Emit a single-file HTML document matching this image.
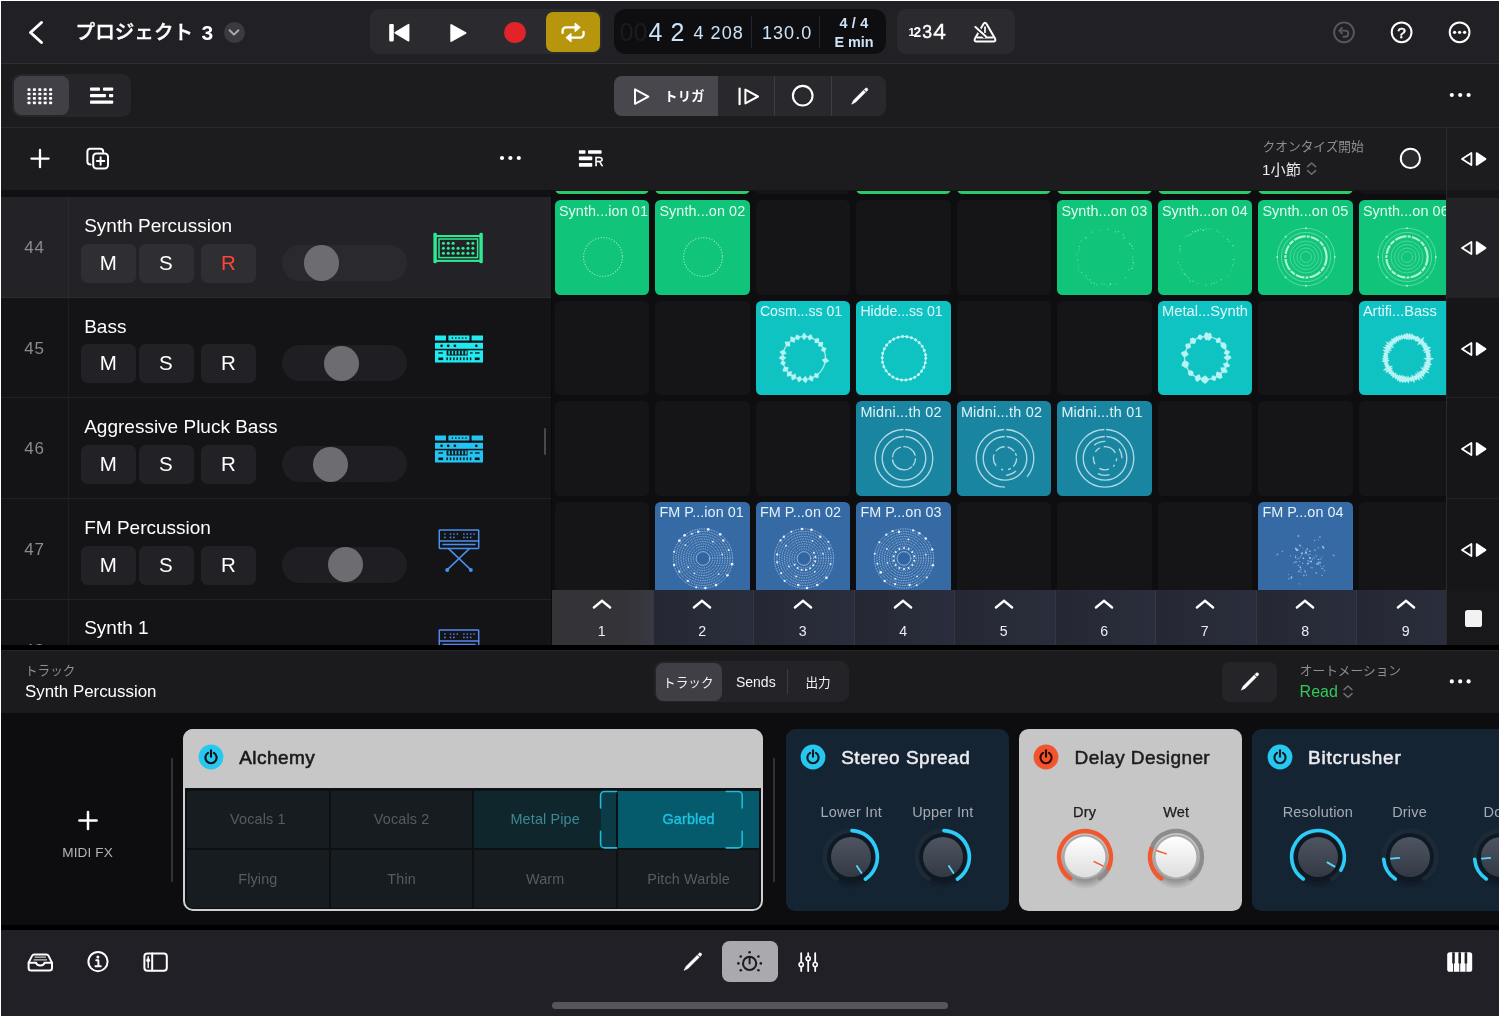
<!DOCTYPE html>
<html lang="ja">
<head>
<meta charset="utf-8">
<title>Logic Pro</title>
<style>
html,body{margin:0;padding:0;background:#fff;}
body{width:1500px;height:1018px;overflow:hidden;}
#app{position:relative;width:1500px;height:1018px;overflow:hidden;background:#0f0f11;
  font-family:"Liberation Sans","Noto Sans CJK JP",sans-serif;color:#fff;}
#app *{box-sizing:border-box;}
.abs{position:absolute;}
.t{position:absolute;white-space:pre;line-height:1;}
#layer{position:absolute;left:0;top:0;width:1500px;height:1018px;will-change:transform;}
svg{position:absolute;overflow:visible;}
/* white frame */
.frame{position:absolute;background:#fff;z-index:100;}
/* bars */
#topbar{left:0;top:0;width:1500px;height:63px;background:#202025;}
#topline{left:0;top:63px;width:1500px;height:1px;background:#2f2f34;}
#bar2{left:0;top:64px;width:1500px;height:63px;background:#1c1c1f;}
#bar2line{left:0;top:127px;width:1500px;height:1px;background:#2a2a2e;}
#hdr{left:0;top:128px;width:1500px;height:62px;background:#1c1c1f;}
.pill{position:absolute;background:#2a2a2f;border-radius:9px;}
</style>
</head>
<body>
<div id="app">
<div id="layer">

<!-- ===== TOP BAR ===== -->
<div class="abs" id="topbar"></div>
<div class="abs" id="topline"></div>
<div class="abs" id="bar2"></div>
<div class="abs" id="bar2line"></div>
<div class="abs" id="hdr"></div>

<svg style="left:24px;top:16px;" width="24" height="32" viewBox="24 16 24 32"><polyline points="41.5,22.5 30.5,32.5 41.5,42.5" fill="none" stroke="#fff" stroke-width="3" stroke-linecap="round" stroke-linejoin="round"/></svg>
<div class="t" style="left:75.6px;top:22.71px;font-size:19.6px;color:#fff;font-weight:500;-webkit-text-stroke:0.4px #fff;">プロジェクト</div>
<div class="t" style="left:201.4px;top:21.72px;font-size:21px;color:#fff;font-weight:700;">3</div>
<div class="abs" style="left:223.5px;top:21.5px;width:21px;height:21px;background:#3a3a40;border-radius:10.5px;"></div>
<svg style="left:223px;top:21px;" width="22" height="22" viewBox="223 21 22 22"><polyline points="229.6,30.2 234,34.6 238.4,30.2" fill="none" stroke="#a9a9b2" stroke-width="2" stroke-linecap="round" stroke-linejoin="round"/></svg>
<div class="abs" style="left:370px;top:9px;width:232px;height:45px;background:#2a2a2f;border-radius:9px;"></div>
<svg style="left:386px;top:20px;" width="28" height="26" viewBox="386 20 28 26"><rect x="389.2" y="24" width="4.6" height="17.4" rx="1.1" fill="#fff"/><path d="M408.6,24.6 L408.6,40.8 L395.2,32.7 Z" fill="#fff" stroke="#fff" stroke-width="1.6" stroke-linejoin="round"/></svg>
<svg style="left:446px;top:20px;" width="26" height="26" viewBox="446 20 26 26"><path d="M451.2,25 L451.2,41 L465.6,33 Z" fill="#fff" stroke="#fff" stroke-width="1.8" stroke-linejoin="round"/></svg>
<div class="abs" style="left:504.3px;top:21.5px;width:21.6px;height:21.6px;background:#e0242a;border-radius:10.8px;"></div>
<div class="abs" style="left:545.6px;top:12px;width:54.8px;height:40px;background:#b7950c;border-radius:7px;"></div>
<svg style="left:556px;top:18px;" width="34" height="28" viewBox="556 18 34 28"><g fill="none" stroke="#fff" stroke-width="2.3" stroke-linecap="round" stroke-linejoin="round"><path d="M562.6,33 v-2.2 a3.4,3.4 0 0 1 3.4,-3.4 h9.6"/><path d="M583.6,31.8 v2.4 a3.4,3.4 0 0 1 -3.4,3.4 h-9.6"/></g><path d="M575.2,23.4 L580,27.4 L575.2,31.4 Z" fill="#fff" stroke="#fff" stroke-width="1.2" stroke-linejoin="round"/><path d="M571,33.6 L566.2,37.6 L571,41.6 Z" fill="#fff" stroke="#fff" stroke-width="1.2" stroke-linejoin="round"/></svg>
<div class="abs" style="left:614px;top:9px;width:272px;height:45px;background:#0e0e10;border-radius:12px;"></div>
<div class="t" style="left:619.5px;top:19.84px;font-size:25px;color:#191c20;">00</div>
<div class="t" style="left:648.5px;top:19.84px;font-size:25px;color:#cde3f7;">4</div>
<div class="t" style="left:670.5px;top:19.84px;font-size:25px;color:#cde3f7;">2</div>
<div class="t" style="left:693.5px;top:23.96px;font-size:18px;color:#cde3f7;letter-spacing:1.05px;">4 208</div>
<div class="abs" style="left:751px;top:16px;width:1px;height:32px;background:#1f2730;"></div>
<div class="t" style="left:762px;top:23.96px;font-size:18px;color:#cde3f7;letter-spacing:1.05px;">130.0</div>
<div class="abs" style="left:819px;top:16px;width:1px;height:32px;background:#1f2730;"></div>
<div class="t" style="left:816px;top:16.11px;width:80px;text-align:center;font-size:14.4px;color:#cde3f7;font-weight:700;letter-spacing:4.4px;">4/4</div>
<div class="t" style="left:814px;top:34.81px;width:80px;text-align:center;font-size:14.4px;color:#cde3f7;font-weight:700;">E min</div>
<div class="abs" style="left:897px;top:9px;width:118px;height:45px;background:#2a2a2f;border-radius:9px;"></div>
<div class="t" style="left:908.4px;top:26.75px;font-size:11.4px;color:#fff;font-weight:700;">1</div>
<div class="t" style="left:913.6px;top:25.82px;font-size:13.8px;color:#fff;font-weight:700;">2</div>
<div class="t" style="left:922.2px;top:23.7px;font-size:17.6px;color:#fff;-webkit-text-stroke:0.45px #fff;">3</div>
<div class="t" style="left:933.2px;top:20.87px;font-size:22.6px;color:#fff;-webkit-text-stroke:0.35px #fff;">4</div>
<svg style="left:970px;top:18px;" width="30" height="30" viewBox="970 18 30 30"><g fill="none" stroke="#fff" stroke-width="2" stroke-linecap="round" stroke-linejoin="round"><path d="M983.4,24 Q985,21.4 986.6,24 L995,38.6 Q996.4,41.6 993.2,41.6 H976.8 Q973.6,41.6 975,38.6 Z"/><path d="M977.4,37.4 h15.2"/></g><path d="M975.4,27 L986,36.6" stroke="#2a2a2f" stroke-width="5" stroke-linecap="butt" fill="none"/><path d="M975.4,27 L986,36.6" stroke="#fff" stroke-width="2" stroke-linecap="round" fill="none"/><path d="M985,27.2 v5" stroke="#fff" stroke-width="1.7" stroke-linecap="round" fill="none"/></svg>
<svg style="left:1332px;top:20px;" width="24" height="24" viewBox="1332 20 24 24"><g fill="none" stroke="#58585e" stroke-width="1.9" stroke-linecap="round" stroke-linejoin="round"><circle cx="1344" cy="32.3" r="9.9"/><path d="M1339.6,30.6 h5.6 a3.1,3.1 0 0 1 0,6.2 h-1.8"/><path d="M1342,27.9 l-2.7,2.7 l2.7,2.7"/></g></svg>
<svg style="left:1389px;top:20px;" width="24" height="24" viewBox="1389 20 24 24"><circle cx="1401.6" cy="32.3" r="9.9" fill="none" stroke="#fff" stroke-width="2"/></svg>
<div class="t" style="left:1386.6px;top:24.68px;width:30px;text-align:center;font-size:15.5px;color:#fff;-webkit-text-stroke:0.5px #fff;">?</div>
<svg style="left:1447px;top:20px;" width="24" height="24" viewBox="1447 20 24 24"><circle cx="1459.6" cy="32.3" r="9.9" fill="none" stroke="#fff" stroke-width="2"/><circle cx="1454.6" cy="32.3" r="1.65" fill="#fff"/><circle cx="1459.6" cy="32.3" r="1.65" fill="#fff"/><circle cx="1464.6" cy="32.3" r="1.65" fill="#fff"/></svg>


<div class="abs" style="left:12px;top:74px;width:119px;height:43px;background:#26262a;border-radius:9px;"></div>
<div class="abs" style="left:13.5px;top:76px;width:55px;height:39px;background:#404046;border-radius:7.5px;"></div>
<svg style="left:26px;top:86px;" width="30" height="20" viewBox="26 86 30 20"><rect x="27.45" y="88.25" width="3.1" height="2.7" rx="0.9" fill="#fff"/><rect x="32.85" y="88.25" width="3.1" height="2.7" rx="0.9" fill="#fff"/><rect x="38.25" y="88.25" width="3.1" height="2.7" rx="0.9" fill="#fff"/><rect x="43.65" y="88.25" width="3.1" height="2.7" rx="0.9" fill="#fff"/><rect x="49.05" y="88.25" width="3.1" height="2.7" rx="0.9" fill="#fff"/><rect x="27.45" y="92.65" width="3.1" height="2.7" rx="0.9" fill="#fff"/><rect x="32.85" y="92.65" width="3.1" height="2.7" rx="0.9" fill="#fff"/><rect x="38.25" y="92.65" width="3.1" height="2.7" rx="0.9" fill="#fff"/><rect x="43.65" y="92.65" width="3.1" height="2.7" rx="0.9" fill="#fff"/><rect x="49.05" y="92.65" width="3.1" height="2.7" rx="0.9" fill="#fff"/><rect x="27.45" y="97.05" width="3.1" height="2.7" rx="0.9" fill="#fff"/><rect x="32.85" y="97.05" width="3.1" height="2.7" rx="0.9" fill="#fff"/><rect x="38.25" y="97.05" width="3.1" height="2.7" rx="0.9" fill="#fff"/><rect x="43.65" y="97.05" width="3.1" height="2.7" rx="0.9" fill="#fff"/><rect x="49.05" y="97.05" width="3.1" height="2.7" rx="0.9" fill="#fff"/><rect x="27.45" y="101.45" width="3.1" height="2.7" rx="0.9" fill="#fff"/><rect x="32.85" y="101.45" width="3.1" height="2.7" rx="0.9" fill="#fff"/><rect x="38.25" y="101.45" width="3.1" height="2.7" rx="0.9" fill="#fff"/><rect x="43.65" y="101.45" width="3.1" height="2.7" rx="0.9" fill="#fff"/><rect x="49.05" y="101.45" width="3.1" height="2.7" rx="0.9" fill="#fff"/></svg>
<svg style="left:88px;top:86px;" width="28" height="20" viewBox="88 86 28 20"><g fill="#fff"><rect x="90" y="87.4" width="10" height="3.3" rx="0.8"/><rect x="103" y="87.4" width="10.2" height="3.3" rx="0.8"/><rect x="90" y="93.9" width="16" height="3.3" rx="0.8"/><rect x="109" y="93.9" width="4.2" height="3.3" rx="0.8"/><rect x="90" y="100.4" width="23.2" height="3.3" rx="0.8"/></g></svg>
<div class="abs" style="left:614px;top:76px;width:272px;height:40px;background:#29292d;border-radius:8px;"></div>
<div class="abs" style="left:614px;top:76px;width:103.5px;height:40px;background:#47474d;border-radius:8px 0 0 8px;"></div>
<div class="abs" style="left:774px;top:76px;width:1px;height:40px;background:#3d3d42;"></div>
<div class="abs" style="left:831.4px;top:76px;width:1px;height:40px;background:#3d3d42;"></div>
<svg style="left:630px;top:86px;" width="22" height="22" viewBox="630 86 22 22"><path d="M635,89.4 L635,103.8 L648.4,96.6 Z" fill="none" stroke="#fff" stroke-width="2" stroke-linejoin="round"/></svg>
<div class="t" style="left:664.2px;top:90.13px;font-size:13.2px;color:#fff;font-weight:700;letter-spacing:0.3px;">トリガ</div>
<svg style="left:736px;top:86px;" width="26" height="22" viewBox="736 86 26 22"><path d="M739.6,88.6 V104.2" stroke="#fff" stroke-width="2.2" stroke-linecap="round" fill="none"/><path d="M745.4,89.6 L745.4,103.4 L758,96.5 Z" fill="none" stroke="#fff" stroke-width="2" stroke-linejoin="round"/></svg>
<svg style="left:790px;top:84px;" width="26" height="24" viewBox="790 84 26 24"><circle cx="802.7" cy="95.7" r="9.8" fill="none" stroke="#fff" stroke-width="2.1"/></svg>
<svg style="left:848px;top:84px;" width="24" height="24" viewBox="848 84 24 24"><path d="M851.6,104.2 L855.6,102.26 L865.51,92.34 L863.46,90.29 L853.54,100.2 Z" fill="#fff" stroke="#fff" stroke-width="0.5" stroke-linejoin="round"/><path d="M866.22,91.63 L867.92,89.93 Q868.02,87.78 865.87,87.88 L864.17,89.58 Z" fill="#fff" stroke="#fff" stroke-width="0.5" stroke-linejoin="round"/></svg>
<svg style="left:1446px;top:90px;" width="28" height="10" viewBox="1446 90 28 10"><circle cx="1451.8" cy="95" r="2.1" fill="#fff"/><circle cx="1460.2" cy="95" r="2.1" fill="#fff"/><circle cx="1468.6" cy="95" r="2.1" fill="#fff"/></svg>


<svg style="left:30px;top:148px;" width="20" height="20" viewBox="30 148 20 20"><path d="M40,150 V167.2 M31.4,158.6 H48.6" stroke="#fff" stroke-width="2.3" stroke-linecap="round" fill="none"/></svg>
<svg style="left:85px;top:146px;" width="26" height="26" viewBox="85 146 26 26"><g fill="none" stroke="#fff" stroke-width="2" stroke-linecap="round" stroke-linejoin="round"><path d="M90.6,164.4 h-0.2 a3,3 0 0 1 -3,-3 v-9.6 a3,3 0 0 1 3,-3 h9.8 a3,3 0 0 1 3,3 v0.2"/><rect x="93.2" y="153.6" width="14.8" height="14.8" rx="3.2"/><path d="M100.6,157.3 v7.4 M96.9,161 h7.4"/></g></svg>
<svg style="left:498px;top:153px;" width="26" height="10" viewBox="498 153 26 10"><circle cx="502" cy="158" r="2.1" fill="#fff"/><circle cx="510.4" cy="158" r="2.1" fill="#fff"/><circle cx="518.8" cy="158" r="2.1" fill="#fff"/></svg>
<svg style="left:576px;top:148px;" width="30" height="22" viewBox="576 148 30 22"><g fill="#fff"><rect x="578.9" y="150.2" width="6.6" height="3.6" rx="0.7"/><rect x="588" y="150.2" width="13.6" height="3.6" rx="0.7"/><rect x="578.9" y="156.6" width="13.4" height="3.6" rx="0.7"/><rect x="578.9" y="163.1" width="13.4" height="3.6" rx="0.7"/></g></svg>
<div class="t" style="left:594.4px;top:156.4px;font-size:12.4px;color:#fff;-webkit-text-stroke:0.4px #fff;">R</div>
<div class="t" style="left:1262.6px;top:141.45px;font-size:12.7px;color:#8e8e93;">クオンタイズ開始</div>
<div class="t" style="left:1262px;top:161.53px;font-size:15.2px;color:#e8e8ed;">1小節</div>
<svg style="left:1304px;top:160px;" width="16" height="18" viewBox="1304 160 16 18"><g fill="none" stroke="#6e6e73" stroke-width="1.5" stroke-linecap="round" stroke-linejoin="round"><polyline points="1307.6,166.6 1311.6,163 1315.6,166.6"/><polyline points="1307.6,170.6 1311.6,174.2 1315.6,170.6"/></g></svg>
<svg style="left:1398px;top:146px;" width="26" height="26" viewBox="1398 146 26 26"><circle cx="1410.4" cy="158.4" r="9.6" fill="#2b2b2e" stroke="#fff" stroke-width="2"/></svg>


<div class="abs" style="left:0;top:190px;width:552px;height:455px;overflow:hidden;background:#141416;">
<div class="abs" style="left:0;top:-190px;width:552px;height:700px;">
<div class="abs" style="left:0px;top:190px;width:552px;height:7.5px;background:#111113;"></div>
<div class="abs" style="left:0px;top:197.2px;width:551px;height:100.6px;background:#232327;"></div>
<div class="abs" style="left:0px;top:296.8px;width:551px;height:1px;background:#2b2b2f;"></div>
<div class="abs" style="left:68px;top:197.2px;width:1px;height:100.6px;background:#2a2a2e;"></div>
<div class="t" style="left:4.6px;top:239.21px;width:60px;text-align:center;font-size:17px;color:#8a8a8f;letter-spacing:0.9px;">44</div>
<div class="t" style="left:84.2px;top:215.92px;font-size:19px;color:#fff;">Synth Percussion</div>
<div class="abs" style="left:81px;top:243.7px;width:55px;height:39px;background:#2e2e33;border-radius:6.5px;"></div>
<div class="t" style="left:80.9px;top:252.85px;width:55px;text-align:center;font-size:20.5px;color:#fff;">M</div>
<div class="abs" style="left:138.5px;top:243.7px;width:55px;height:39px;background:#2e2e33;border-radius:6.5px;"></div>
<div class="t" style="left:138.4px;top:252.85px;width:55px;text-align:center;font-size:20.5px;color:#fff;">S</div>
<div class="abs" style="left:201px;top:243.7px;width:55px;height:39px;background:#2e2e33;border-radius:6.5px;"></div>
<div class="t" style="left:200.9px;top:252.85px;width:55px;text-align:center;font-size:20.5px;color:#ff453a;">R</div>
<div class="abs" style="left:282px;top:244.7px;width:125px;height:36px;background:#2a2a2e;border-radius:18px;"></div>
<div class="abs" style="left:303.9px;top:245.3px;width:35.4px;height:35.4px;background:#6c6c71;border-radius:17.7px;"></div>
<div class="abs" style="left:0px;top:297.8px;width:551px;height:100.6px;background:#141416;"></div>
<div class="abs" style="left:0px;top:397.4px;width:551px;height:1px;background:#222225;"></div>
<div class="abs" style="left:68px;top:297.8px;width:1px;height:100.6px;background:#1f1f22;"></div>
<div class="t" style="left:4.6px;top:339.81px;width:60px;text-align:center;font-size:17px;color:#8a8a8f;letter-spacing:0.9px;">45</div>
<div class="t" style="left:84.2px;top:316.52px;font-size:19px;color:#fff;">Bass</div>
<div class="abs" style="left:81px;top:344.3px;width:55px;height:39px;background:#222226;border-radius:6.5px;"></div>
<div class="t" style="left:80.9px;top:353.45px;width:55px;text-align:center;font-size:20.5px;color:#fff;">M</div>
<div class="abs" style="left:138.5px;top:344.3px;width:55px;height:39px;background:#222226;border-radius:6.5px;"></div>
<div class="t" style="left:138.4px;top:353.45px;width:55px;text-align:center;font-size:20.5px;color:#fff;">S</div>
<div class="abs" style="left:201px;top:344.3px;width:55px;height:39px;background:#222226;border-radius:6.5px;"></div>
<div class="t" style="left:200.9px;top:353.45px;width:55px;text-align:center;font-size:20.5px;color:#fff;">R</div>
<div class="abs" style="left:282px;top:345.3px;width:125px;height:36px;background:#1f1f23;border-radius:18px;"></div>
<div class="abs" style="left:323.9px;top:345.9px;width:35.4px;height:35.4px;background:#6c6c71;border-radius:17.7px;"></div>
<div class="abs" style="left:0px;top:398.4px;width:551px;height:100.6px;background:#141416;"></div>
<div class="abs" style="left:0px;top:498px;width:551px;height:1px;background:#222225;"></div>
<div class="abs" style="left:68px;top:398.4px;width:1px;height:100.6px;background:#1f1f22;"></div>
<div class="t" style="left:4.6px;top:440.41px;width:60px;text-align:center;font-size:17px;color:#8a8a8f;letter-spacing:0.9px;">46</div>
<div class="t" style="left:84.2px;top:417.12px;font-size:19px;color:#fff;">Aggressive Pluck Bass</div>
<div class="abs" style="left:81px;top:444.9px;width:55px;height:39px;background:#222226;border-radius:6.5px;"></div>
<div class="t" style="left:80.9px;top:454.05px;width:55px;text-align:center;font-size:20.5px;color:#fff;">M</div>
<div class="abs" style="left:138.5px;top:444.9px;width:55px;height:39px;background:#222226;border-radius:6.5px;"></div>
<div class="t" style="left:138.4px;top:454.05px;width:55px;text-align:center;font-size:20.5px;color:#fff;">S</div>
<div class="abs" style="left:201px;top:444.9px;width:55px;height:39px;background:#222226;border-radius:6.5px;"></div>
<div class="t" style="left:200.9px;top:454.05px;width:55px;text-align:center;font-size:20.5px;color:#fff;">R</div>
<div class="abs" style="left:282px;top:445.9px;width:125px;height:36px;background:#1f1f23;border-radius:18px;"></div>
<div class="abs" style="left:312.5px;top:446.5px;width:35.4px;height:35.4px;background:#6c6c71;border-radius:17.7px;"></div>
<div class="abs" style="left:0px;top:499px;width:551px;height:100.6px;background:#141416;"></div>
<div class="abs" style="left:0px;top:598.6px;width:551px;height:1px;background:#222225;"></div>
<div class="abs" style="left:68px;top:499px;width:1px;height:100.6px;background:#1f1f22;"></div>
<div class="t" style="left:4.6px;top:541.01px;width:60px;text-align:center;font-size:17px;color:#8a8a8f;letter-spacing:0.9px;">47</div>
<div class="t" style="left:84.2px;top:517.72px;font-size:19px;color:#fff;">FM Percussion</div>
<div class="abs" style="left:81px;top:545.5px;width:55px;height:39px;background:#222226;border-radius:6.5px;"></div>
<div class="t" style="left:80.9px;top:554.65px;width:55px;text-align:center;font-size:20.5px;color:#fff;">M</div>
<div class="abs" style="left:138.5px;top:545.5px;width:55px;height:39px;background:#222226;border-radius:6.5px;"></div>
<div class="t" style="left:138.4px;top:554.65px;width:55px;text-align:center;font-size:20.5px;color:#fff;">S</div>
<div class="abs" style="left:201px;top:545.5px;width:55px;height:39px;background:#222226;border-radius:6.5px;"></div>
<div class="t" style="left:200.9px;top:554.65px;width:55px;text-align:center;font-size:20.5px;color:#fff;">R</div>
<div class="abs" style="left:282px;top:546.5px;width:125px;height:36px;background:#1f1f23;border-radius:18px;"></div>
<div class="abs" style="left:327.6px;top:547.1px;width:35.4px;height:35.4px;background:#6c6c71;border-radius:17.7px;"></div>
<div class="abs" style="left:0px;top:599.6px;width:551px;height:100.6px;background:#141416;"></div>
<div class="abs" style="left:0px;top:699.2px;width:551px;height:1px;background:#222225;"></div>
<div class="abs" style="left:68px;top:599.6px;width:1px;height:100.6px;background:#1f1f22;"></div>
<div class="t" style="left:4.6px;top:641.61px;width:60px;text-align:center;font-size:17px;color:#8a8a8f;letter-spacing:0.9px;">48</div>
<div class="t" style="left:84.2px;top:618.32px;font-size:19px;color:#fff;">Synth 1</div>
<div class="abs" style="left:81px;top:646.1px;width:55px;height:39px;background:#222226;border-radius:6.5px;"></div>
<div class="t" style="left:80.9px;top:655.25px;width:55px;text-align:center;font-size:20.5px;color:#fff;">M</div>
<div class="abs" style="left:138.5px;top:646.1px;width:55px;height:39px;background:#222226;border-radius:6.5px;"></div>
<div class="t" style="left:138.4px;top:655.25px;width:55px;text-align:center;font-size:20.5px;color:#fff;">S</div>
<div class="abs" style="left:201px;top:646.1px;width:55px;height:39px;background:#222226;border-radius:6.5px;"></div>
<div class="t" style="left:200.9px;top:655.25px;width:55px;text-align:center;font-size:20.5px;color:#fff;">R</div>
<div class="abs" style="left:282px;top:647.1px;width:125px;height:36px;background:#1f1f23;border-radius:18px;"></div>
<div class="abs" style="left:320.3px;top:647.7px;width:35.4px;height:35.4px;background:#6c6c71;border-radius:17.7px;"></div>
<svg style="left:430.4px;top:230px;" width="56" height="36" viewBox="430.4 230 56 36"><g fill="#2eea94"><rect x="433.8" y="232.7" width="3.4" height="30.6" rx="1.4"/><rect x="479.8" y="232.7" width="3.4" height="30.6" rx="1.4"/><rect x="435.5" y="235" width="46" height="2.1"/><rect x="435.5" y="259.8" width="46" height="2.1"/></g><rect x="439.4" y="239" width="38.6" height="18.6" fill="none" stroke="#2eea94" stroke-width="1.5"/><circle cx="443.8" cy="243.3" r="1.55" fill="#2eea94"/><circle cx="448.7" cy="243.3" r="1.55" fill="#2eea94"/><circle cx="453.5" cy="243.3" r="1.55" fill="#2eea94"/><circle cx="468.4" cy="243.3" r="1.55" fill="#2eea94"/><circle cx="473.3" cy="243.3" r="1.55" fill="#2eea94"/><circle cx="443.8" cy="248.3" r="1.55" fill="#2eea94"/><circle cx="448.7" cy="248.3" r="1.55" fill="#2eea94"/><circle cx="453.5" cy="248.3" r="1.55" fill="#2eea94"/><circle cx="458.5" cy="248.3" r="1.55" fill="#2eea94"/><circle cx="463.4" cy="248.3" r="1.55" fill="#2eea94"/><circle cx="468.4" cy="248.3" r="1.55" fill="#2eea94"/><circle cx="473.3" cy="248.3" r="1.55" fill="#2eea94"/><circle cx="443.8" cy="253.3" r="1.55" fill="#2eea94"/><circle cx="448.7" cy="253.3" r="1.55" fill="#2eea94"/><circle cx="453.5" cy="253.3" r="1.55" fill="#2eea94"/><circle cx="458.5" cy="253.3" r="1.55" fill="#2eea94"/><circle cx="463.4" cy="253.3" r="1.55" fill="#2eea94"/><circle cx="468.4" cy="253.3" r="1.55" fill="#2eea94"/><circle cx="473.3" cy="253.3" r="1.55" fill="#2eea94"/></svg>
<svg style="left:432.6px;top:332.6px;" width="52" height="32" viewBox="432.6 332.6 52 32"><g fill="#1feaf2"><rect x="434.6" y="335.1" width="11" height="5"/><rect x="448" y="335.1" width="21" height="5"/><rect x="471.2" y="335.1" width="11.4" height="5"/><rect x="434.6" y="342.4" width="48" height="6"/><rect x="434.6" y="349.9" width="48" height="12.2"/></g><g fill="#141416"><rect x="451.2" y="336.9" width="1.5" height="1.4"/><rect x="454.6" y="336.9" width="1.5" height="1.4"/><rect x="458" y="336.9" width="1.5" height="1.4"/><rect x="461.4" y="336.9" width="1.5" height="1.4"/><rect x="464.8" y="336.9" width="1.5" height="1.4"/><circle cx="441.2" cy="345.4" r="1.35"/><circle cx="447.8" cy="345.4" r="1.35"/><circle cx="454.5" cy="345.4" r="1.35"/><circle cx="475.9" cy="345.4" r="1.35"/><rect x="446.2" y="349.9" width="21" height="5.2"/><rect x="438" y="351.9" width="4.6" height="1.3"/><rect x="469.6" y="351.9" width="2.6" height="1.3"/><rect x="474.6" y="351.9" width="4.6" height="1.3"/><rect x="438" y="357.1" width="4.8" height="2.6"/><rect x="474.4" y="357.1" width="4.8" height="2.6"/><rect x="446" y="357" width="1.5" height="2.8"/><rect x="449.35" y="357" width="1.5" height="2.8"/><rect x="452.7" y="357" width="1.5" height="2.8"/><rect x="456.05" y="357" width="1.5" height="2.8"/><rect x="459.4" y="357" width="1.5" height="2.8"/><rect x="462.75" y="357" width="1.5" height="2.8"/><rect x="466.1" y="357" width="1.5" height="2.8"/><rect x="469.45" y="357" width="1.5" height="2.8"/></g><g fill="#1feaf2"><rect x="448" y="350.5" width="1.5" height="3.6"/><rect x="451.35" y="350.5" width="1.5" height="3.6"/><rect x="454.7" y="350.5" width="1.5" height="3.6"/><rect x="458.05" y="350.5" width="1.5" height="3.6"/><rect x="461.4" y="350.5" width="1.5" height="3.6"/><rect x="464.75" y="350.5" width="1.5" height="3.6"/></g></svg>
<svg style="left:432.6px;top:433.1px;" width="52" height="32" viewBox="432.6 433.1 52 32"><g fill="#22c4f4"><rect x="434.6" y="435.6" width="11" height="5"/><rect x="448" y="435.6" width="21" height="5"/><rect x="471.2" y="435.6" width="11.4" height="5"/><rect x="434.6" y="442.9" width="48" height="6"/><rect x="434.6" y="450.4" width="48" height="12.2"/></g><g fill="#141416"><rect x="451.2" y="437.4" width="1.5" height="1.4"/><rect x="454.6" y="437.4" width="1.5" height="1.4"/><rect x="458" y="437.4" width="1.5" height="1.4"/><rect x="461.4" y="437.4" width="1.5" height="1.4"/><rect x="464.8" y="437.4" width="1.5" height="1.4"/><circle cx="441.2" cy="445.9" r="1.35"/><circle cx="447.8" cy="445.9" r="1.35"/><circle cx="454.5" cy="445.9" r="1.35"/><circle cx="475.9" cy="445.9" r="1.35"/><rect x="446.2" y="450.4" width="21" height="5.2"/><rect x="438" y="452.4" width="4.6" height="1.3"/><rect x="469.6" y="452.4" width="2.6" height="1.3"/><rect x="474.6" y="452.4" width="4.6" height="1.3"/><rect x="438" y="457.6" width="4.8" height="2.6"/><rect x="474.4" y="457.6" width="4.8" height="2.6"/><rect x="446" y="457.5" width="1.5" height="2.8"/><rect x="449.35" y="457.5" width="1.5" height="2.8"/><rect x="452.7" y="457.5" width="1.5" height="2.8"/><rect x="456.05" y="457.5" width="1.5" height="2.8"/><rect x="459.4" y="457.5" width="1.5" height="2.8"/><rect x="462.75" y="457.5" width="1.5" height="2.8"/><rect x="466.1" y="457.5" width="1.5" height="2.8"/><rect x="469.45" y="457.5" width="1.5" height="2.8"/></g><g fill="#22c4f4"><rect x="448" y="451" width="1.5" height="3.6"/><rect x="451.35" y="451" width="1.5" height="3.6"/><rect x="454.7" y="451" width="1.5" height="3.6"/><rect x="458.05" y="451" width="1.5" height="3.6"/><rect x="461.4" y="451" width="1.5" height="3.6"/><rect x="464.75" y="451" width="1.5" height="3.6"/></g></svg>
<svg style="left:434.7px;top:527.6px;" width="48" height="46" viewBox="434.7 527.6 48 46"><g fill="none" stroke="#4a90ee" stroke-width="1.5" stroke-linejoin="round" stroke-linecap="round"><rect x="439" y="529.6" width="39.4" height="18.4" rx="0.6"/><path d="M439,540.6 h39.4"/><path d="M442.7,544.2 h32"/><path d="M448.3,548.2 L470.3,569.2 M469.1,548.2 L447.1,569.2"/></g><g fill="#4a90ee"><circle cx="444.6" cy="533.6" r="0.85"/><circle cx="450.2" cy="533.6" r="0.85"/><circle cx="453.6" cy="533.6" r="0.85"/><circle cx="457" cy="533.6" r="0.85"/><circle cx="463.6" cy="533.6" r="0.85"/><circle cx="467" cy="533.6" r="0.85"/><circle cx="470.4" cy="533.6" r="0.85"/><circle cx="473.8" cy="533.6" r="0.85"/><circle cx="444.6" cy="537" r="0.85"/><circle cx="450.2" cy="537" r="0.85"/><circle cx="453.6" cy="537" r="0.85"/><circle cx="463.6" cy="537" r="0.85"/><circle cx="467" cy="537" r="0.85"/><circle cx="470.4" cy="537" r="0.85"/><circle cx="446.9" cy="569.6" r="2"/><circle cx="470.5" cy="569.6" r="2"/></g></svg>
<svg style="left:434.7px;top:628.2px;" width="48" height="46" viewBox="434.7 628.2 48 46"><g fill="none" stroke="#5486f0" stroke-width="1.5" stroke-linejoin="round" stroke-linecap="round"><rect x="439" y="630.2" width="39.4" height="18.4" rx="0.6"/><path d="M439,641.2 h39.4"/><path d="M442.7,644.8 h32"/></g><g fill="#5486f0"><circle cx="444.6" cy="634.2" r="0.85"/><circle cx="450.2" cy="634.2" r="0.85"/><circle cx="453.6" cy="634.2" r="0.85"/><circle cx="457" cy="634.2" r="0.85"/><circle cx="463.6" cy="634.2" r="0.85"/><circle cx="467" cy="634.2" r="0.85"/><circle cx="470.4" cy="634.2" r="0.85"/><circle cx="473.8" cy="634.2" r="0.85"/><circle cx="444.6" cy="637.6" r="0.85"/><circle cx="450.2" cy="637.6" r="0.85"/><circle cx="453.6" cy="637.6" r="0.85"/><circle cx="463.6" cy="637.6" r="0.85"/><circle cx="467" cy="637.6" r="0.85"/><circle cx="470.4" cy="637.6" r="0.85"/></g></svg>
<div class="abs" style="left:543.6px;top:428px;width:2.6px;height:27px;background:#47474c;border-radius:1.3px;"></div>
</div></div>
<div class="abs" style="left:551px;top:190px;width:1px;height:455px;background:#0a0a0b;"></div>
<div class="abs" style="left:1446px;top:128px;width:54px;height:62px;background:#1c1c1f;"></div>
<div class="abs" style="left:1446px;top:190px;width:54px;height:455px;background:#161618;"></div>
<div class="abs" style="left:1446px;top:197.5px;width:54px;height:100.6px;background:#232327;"></div>
<div class="abs" style="left:1446px;top:296.8px;width:54px;height:1px;background:#222225;"></div>
<div class="abs" style="left:1446px;top:397.4px;width:54px;height:1px;background:#222225;"></div>
<div class="abs" style="left:1446px;top:498px;width:54px;height:1px;background:#222225;"></div>
<div class="abs" style="left:1446px;top:598.6px;width:54px;height:1px;background:#222225;"></div>
<div class="abs" style="left:1446px;top:128px;width:1px;height:517px;background:#2a2a2d;"></div>
<div class="abs" style="left:1446px;top:590px;width:54px;height:55px;background:#18181b;"></div>
<div class="abs" style="left:1446px;top:590px;width:1px;height:55px;background:#2a2a2d;"></div>
<svg style="left:1456px;top:148.8px;" width="36" height="20" viewBox="1456 148.8 36 20"><path d="M1471.4,152.8 L1471.4,164.8 L1462,158.8 Z" fill="none" stroke="#fff" stroke-width="1.8" stroke-linejoin="round"/><path d="M1476.6,152.8 L1476.6,164.8 L1485.6,158.8 Z" fill="#fff" stroke="#fff" stroke-width="1.6" stroke-linejoin="round"/></svg>
<svg style="left:1456px;top:238.2px;" width="36" height="20" viewBox="1456 238.2 36 20"><path d="M1471.4,242.2 L1471.4,254.2 L1462,248.2 Z" fill="none" stroke="#fff" stroke-width="1.8" stroke-linejoin="round"/><path d="M1476.6,242.2 L1476.6,254.2 L1485.6,248.2 Z" fill="#fff" stroke="#fff" stroke-width="1.6" stroke-linejoin="round"/></svg>
<svg style="left:1456px;top:338.8px;" width="36" height="20" viewBox="1456 338.8 36 20"><path d="M1471.4,342.8 L1471.4,354.8 L1462,348.8 Z" fill="none" stroke="#fff" stroke-width="1.8" stroke-linejoin="round"/><path d="M1476.6,342.8 L1476.6,354.8 L1485.6,348.8 Z" fill="#fff" stroke="#fff" stroke-width="1.6" stroke-linejoin="round"/></svg>
<svg style="left:1456px;top:439.4px;" width="36" height="20" viewBox="1456 439.4 36 20"><path d="M1471.4,443.4 L1471.4,455.4 L1462,449.4 Z" fill="none" stroke="#fff" stroke-width="1.8" stroke-linejoin="round"/><path d="M1476.6,443.4 L1476.6,455.4 L1485.6,449.4 Z" fill="#fff" stroke="#fff" stroke-width="1.6" stroke-linejoin="round"/></svg>
<svg style="left:1456px;top:540px;" width="36" height="20" viewBox="1456 540 36 20"><path d="M1471.4,544 L1471.4,556 L1462,550 Z" fill="none" stroke="#fff" stroke-width="1.8" stroke-linejoin="round"/><path d="M1476.6,544 L1476.6,556 L1485.6,550 Z" fill="#fff" stroke="#fff" stroke-width="1.6" stroke-linejoin="round"/></svg>
<div class="abs" style="left:1465px;top:610px;width:17.2px;height:17.2px;background:#f2f2f2;border-radius:2.6px;"></div>


<div class="abs" style="left:552px;top:190px;width:894px;height:400px;overflow:hidden;background:#0e0e10;">
<div class="abs" style="left:-552px;top:-190px;width:1500px;height:700px;">
<div class="abs" style="left:554.5px;top:99.5px;width:94.5px;height:94.5px;background:#2cc968;border-radius:5.5px;"></div>
<div class="abs" style="left:655px;top:99.5px;width:94.5px;height:94.5px;background:#2cc968;border-radius:5.5px;"></div>
<div class="abs" style="left:755.5px;top:99.5px;width:94.5px;height:94.5px;background:#151518;border-radius:5.5px;"></div>
<div class="abs" style="left:856px;top:99.5px;width:94.5px;height:94.5px;background:#2cc968;border-radius:5.5px;"></div>
<div class="abs" style="left:956.5px;top:99.5px;width:94.5px;height:94.5px;background:#2cc968;border-radius:5.5px;"></div>
<div class="abs" style="left:1057px;top:99.5px;width:94.5px;height:94.5px;background:#2cc968;border-radius:5.5px;"></div>
<div class="abs" style="left:1157.5px;top:99.5px;width:94.5px;height:94.5px;background:#2cc968;border-radius:5.5px;"></div>
<div class="abs" style="left:1258px;top:99.5px;width:94.5px;height:94.5px;background:#2cc968;border-radius:5.5px;"></div>
<div class="abs" style="left:1358.5px;top:99.5px;width:94.5px;height:94.5px;background:#151518;border-radius:5.5px;"></div>
<div class="abs" style="left:554.5px;top:200px;width:94.5px;height:94.5px;background:#10c47a;border-radius:5.5px;"></div>
<div class="t" style="left:558.9px;top:203.51px;font-size:14.4px;color:#f1fff8;letter-spacing:0.08px;opacity:0.93;">Synth...ion 01</div>
<svg style="left:554.5px;top:220px;" width="94.5" height="74" viewBox="554.5 220 94.5 74"><circle cx="602.5" cy="257" r="19.4" fill="none" stroke="#d8ffe9" stroke-opacity="0.62" stroke-width="1.35" stroke-linecap="round" stroke-dasharray="0.01 2.77"/></svg>
<div class="abs" style="left:655px;top:200px;width:94.5px;height:94.5px;background:#10c47a;border-radius:5.5px;"></div>
<div class="t" style="left:659.4px;top:203.51px;font-size:14.4px;color:#f1fff8;letter-spacing:0.08px;opacity:0.93;">Synth...on 02</div>
<svg style="left:655px;top:220px;" width="94.5" height="74" viewBox="655 220 94.5 74"><circle cx="703" cy="257" r="19.4" fill="none" stroke="#d8ffe9" stroke-opacity="0.62" stroke-width="1.35" stroke-linecap="round" stroke-dasharray="0.01 2.77"/></svg>
<div class="abs" style="left:755.5px;top:200px;width:94.5px;height:94.5px;background:#151518;border-radius:5.5px;"></div>
<div class="abs" style="left:856px;top:200px;width:94.5px;height:94.5px;background:#151518;border-radius:5.5px;"></div>
<div class="abs" style="left:956.5px;top:200px;width:94.5px;height:94.5px;background:#151518;border-radius:5.5px;"></div>
<div class="abs" style="left:1057px;top:200px;width:94.5px;height:94.5px;background:#10c47a;border-radius:5.5px;"></div>
<div class="t" style="left:1061.4px;top:203.51px;font-size:14.4px;color:#f1fff8;letter-spacing:0.08px;opacity:0.93;">Synth...on 03</div>
<svg style="left:1057px;top:220px;" width="94.5" height="74" viewBox="1057 220 94.5 74"><g fill="#d8ffe9"><circle cx="1107.71" cy="229.45" r="0.72" fill-opacity="0.46"/><circle cx="1115.49" cy="231.66" r="0.85" fill-opacity="0.33"/><circle cx="1118.58" cy="231.59" r="0.72" fill-opacity="0.42"/><circle cx="1123.32" cy="234.67" r="0.76" fill-opacity="0.43"/><circle cx="1124.06" cy="237.94" r="0.71" fill-opacity="0.52"/><circle cx="1129.64" cy="243.83" r="0.81" fill-opacity="0.5"/><circle cx="1131.8" cy="245.9" r="0.78" fill-opacity="0.39"/><circle cx="1132.79" cy="248.57" r="0.53" fill-opacity="0.56"/><circle cx="1132.85" cy="257" r="0.61" fill-opacity="0.47"/><circle cx="1132.59" cy="259.72" r="0.7" fill-opacity="0.37"/><circle cx="1133.41" cy="262.65" r="0.83" fill-opacity="0.49"/><circle cx="1132.92" cy="265.47" r="0.56" fill-opacity="0.48"/><circle cx="1131.9" cy="268.14" r="0.7" fill-opacity="0.57"/><circle cx="1129.08" cy="269.87" r="0.7" fill-opacity="0.54"/><circle cx="1125.63" cy="277.63" r="0.78" fill-opacity="0.28"/><circle cx="1116.06" cy="283.7" r="0.72" fill-opacity="0.27"/><circle cx="1110.38" cy="284.06" r="0.84" fill-opacity="0.56"/><circle cx="1107.86" cy="286.06" r="0.53" fill-opacity="0.36"/><circle cx="1105" cy="283.88" r="0.64" fill-opacity="0.32"/><circle cx="1102.34" cy="284.04" r="0.8" fill-opacity="0.26"/><circle cx="1096.6" cy="284.71" r="0.66" fill-opacity="0.38"/><circle cx="1094.15" cy="283.19" r="0.7" fill-opacity="0.46"/><circle cx="1091.3" cy="282.63" r="0.65" fill-opacity="0.43"/><circle cx="1089.79" cy="279.76" r="0.84" fill-opacity="0.36"/><circle cx="1087.16" cy="278.73" r="0.65" fill-opacity="0.25"/><circle cx="1086.02" cy="275.98" r="0.72" fill-opacity="0.47"/><circle cx="1081.79" cy="272.51" r="0.62" fill-opacity="0.49"/><circle cx="1079.8" cy="270.47" r="0.52" fill-opacity="0.26"/><circle cx="1078.1" cy="268.14" r="0.66" fill-opacity="0.34"/><circle cx="1078.62" cy="265" r="0.61" fill-opacity="0.38"/><circle cx="1077.61" cy="259.7" r="0.77" fill-opacity="0.38"/><circle cx="1076.57" cy="254.2" r="0.58" fill-opacity="0.36"/><circle cx="1078.15" cy="251.66" r="0.65" fill-opacity="0.32"/><circle cx="1079.12" cy="249.15" r="0.62" fill-opacity="0.36"/><circle cx="1079.27" cy="246.34" r="0.56" fill-opacity="0.55"/><circle cx="1080.95" cy="240.93" r="0.58" fill-opacity="0.41"/><circle cx="1085.73" cy="237.73" r="0.79" fill-opacity="0.53"/><circle cx="1091.64" cy="232.01" r="0.62" fill-opacity="0.53"/><circle cx="1099.64" cy="230.08" r="0.65" fill-opacity="0.37"/></g></svg>
<div class="abs" style="left:1157.5px;top:200px;width:94.5px;height:94.5px;background:#10c47a;border-radius:5.5px;"></div>
<div class="t" style="left:1161.9px;top:203.51px;font-size:14.4px;color:#f1fff8;letter-spacing:0.08px;opacity:0.93;">Synth...on 04</div>
<svg style="left:1157.5px;top:220px;" width="94.5" height="74" viewBox="1157.5 220 94.5 74"><g fill="#d8ffe9"><circle cx="1205.5" cy="228.86" r="0.66" fill-opacity="0.57"/><circle cx="1208.27" cy="228.93" r="0.68" fill-opacity="0.31"/><circle cx="1211.1" cy="228.85" r="0.61" fill-opacity="0.28"/><circle cx="1216.39" cy="230.7" r="0.84" fill-opacity="0.26"/><circle cx="1218.87" cy="231.98" r="0.56" fill-opacity="0.47"/><circle cx="1222.59" cy="236.17" r="0.58" fill-opacity="0.32"/><circle cx="1227.03" cy="239.33" r="0.68" fill-opacity="0.54"/><circle cx="1228.78" cy="241.44" r="0.66" fill-opacity="0.48"/><circle cx="1232.47" cy="245.83" r="0.75" fill-opacity="0.54"/><circle cx="1233.13" cy="259.72" r="0.64" fill-opacity="0.55"/><circle cx="1233.78" cy="262.63" r="0.57" fill-opacity="0.25"/><circle cx="1232.23" cy="265.11" r="0.64" fill-opacity="0.59"/><circle cx="1230.78" cy="270.51" r="0.53" fill-opacity="0.34"/><circle cx="1227.62" cy="275.16" r="0.59" fill-opacity="0.29"/><circle cx="1220.63" cy="279.64" r="0.66" fill-opacity="0.45"/><circle cx="1215.88" cy="282.05" r="0.54" fill-opacity="0.48"/><circle cx="1213.43" cy="283.13" r="0.84" fill-opacity="0.34"/><circle cx="1210.87" cy="284" r="0.57" fill-opacity="0.56"/><circle cx="1205.5" cy="285.34" r="0.85" fill-opacity="0.29"/><circle cx="1197.49" cy="283.4" r="0.53" fill-opacity="0.35"/><circle cx="1192.59" cy="281.15" r="0.63" fill-opacity="0.46"/><circle cx="1189.33" cy="281.2" r="0.7" fill-opacity="0.42"/><circle cx="1188.22" cy="278.06" r="0.82" fill-opacity="0.3"/><circle cx="1186.13" cy="276.37" r="0.76" fill-opacity="0.32"/><circle cx="1184.42" cy="274.3" r="0.81" fill-opacity="0.58"/><circle cx="1182.38" cy="272.45" r="0.51" fill-opacity="0.29"/><circle cx="1181.36" cy="269.9" r="0.59" fill-opacity="0.5"/><circle cx="1179.42" cy="267.8" r="0.56" fill-opacity="0.35"/><circle cx="1179.7" cy="264.83" r="0.7" fill-opacity="0.33"/><circle cx="1177.77" cy="262.52" r="0.82" fill-opacity="0.35"/><circle cx="1179.07" cy="251.74" r="0.63" fill-opacity="0.31"/><circle cx="1179.55" cy="249.13" r="0.81" fill-opacity="0.38"/><circle cx="1179.28" cy="246.14" r="0.7" fill-opacity="0.49"/><circle cx="1185.36" cy="236.86" r="0.51" fill-opacity="0.59"/><circle cx="1187.76" cy="235.39" r="0.61" fill-opacity="0.51"/><circle cx="1190.51" cy="234.57" r="0.76" fill-opacity="0.44"/><circle cx="1192.03" cy="231.8" r="0.78" fill-opacity="0.5"/><circle cx="1194.92" cy="231.46" r="0.82" fill-opacity="0.49"/><circle cx="1197.43" cy="230.4" r="0.8" fill-opacity="0.53"/><circle cx="1199.98" cy="229.24" r="0.7" fill-opacity="0.38"/><circle cx="1202.85" cy="230.14" r="0.85" fill-opacity="0.47"/></g></svg>
<div class="abs" style="left:1258px;top:200px;width:94.5px;height:94.5px;background:#10c47a;border-radius:5.5px;"></div>
<div class="t" style="left:1262.4px;top:203.51px;font-size:14.4px;color:#f1fff8;letter-spacing:0.08px;opacity:0.93;">Synth...on 05</div>
<svg style="left:1258px;top:220px;" width="94.5" height="74" viewBox="1258 220 94.5 74"><g fill="none" stroke="#dcffee"><circle cx="1306" cy="257" r="5.5" stroke-opacity="0.33" stroke-width="0.9"/><circle cx="1306" cy="257" r="9" stroke-opacity="0.33" stroke-width="0.9"/><circle cx="1306" cy="257" r="12.5" stroke-opacity="0.33" stroke-width="0.9"/><circle cx="1306" cy="257" r="16" stroke-opacity="0.33" stroke-width="0.9"/><circle cx="1306" cy="257" r="20.6" stroke-opacity="0.78" stroke-width="2.2" stroke-dasharray="9 1.2 5 1.2 12 1.2 3 1.2"/><circle cx="1306" cy="257" r="24.6" stroke-opacity="0.4" stroke-width="0.9"/><circle cx="1306" cy="257" r="28.8" stroke-opacity="0.4" stroke-width="0.9"/></g><g fill="#dcffee" fill-opacity="0.7"><circle cx="1306" cy="228.2" r="0.95"/><circle cx="1326.36" cy="236.64" r="0.95"/><circle cx="1334.8" cy="257" r="0.95"/><circle cx="1326.36" cy="277.36" r="0.95"/><circle cx="1306" cy="285.8" r="0.95"/><circle cx="1285.64" cy="277.36" r="0.95"/><circle cx="1277.2" cy="257" r="0.95"/><circle cx="1285.64" cy="236.64" r="0.95"/></g></svg>
<div class="abs" style="left:1358.5px;top:200px;width:94.5px;height:94.5px;background:#10c47a;border-radius:5.5px;"></div>
<div class="t" style="left:1362.9px;top:203.51px;font-size:14.4px;color:#f1fff8;letter-spacing:0.08px;opacity:0.93;">Synth...on 06</div>
<svg style="left:1358.5px;top:220px;" width="94.5" height="74" viewBox="1358.5 220 94.5 74"><g fill="none" stroke="#dcffee"><circle cx="1406.5" cy="257" r="5.5" stroke-opacity="0.33" stroke-width="0.9"/><circle cx="1406.5" cy="257" r="9" stroke-opacity="0.33" stroke-width="0.9"/><circle cx="1406.5" cy="257" r="12.5" stroke-opacity="0.33" stroke-width="0.9"/><circle cx="1406.5" cy="257" r="16" stroke-opacity="0.33" stroke-width="0.9"/><circle cx="1406.5" cy="257" r="20.6" stroke-opacity="0.78" stroke-width="2.2" stroke-dasharray="9 1.2 5 1.2 12 1.2 3 1.2"/><circle cx="1406.5" cy="257" r="24.6" stroke-opacity="0.4" stroke-width="0.9"/><circle cx="1406.5" cy="257" r="28.8" stroke-opacity="0.4" stroke-width="0.9"/></g><g fill="#dcffee" fill-opacity="0.7"><circle cx="1406.5" cy="228.2" r="0.95"/><circle cx="1426.86" cy="236.64" r="0.95"/><circle cx="1435.3" cy="257" r="0.95"/><circle cx="1426.86" cy="277.36" r="0.95"/><circle cx="1406.5" cy="285.8" r="0.95"/><circle cx="1386.14" cy="277.36" r="0.95"/><circle cx="1377.7" cy="257" r="0.95"/><circle cx="1386.14" cy="236.64" r="0.95"/></g></svg>
<div class="abs" style="left:554.5px;top:300.5px;width:94.5px;height:94.5px;background:#151518;border-radius:5.5px;"></div>
<div class="abs" style="left:655px;top:300.5px;width:94.5px;height:94.5px;background:#151518;border-radius:5.5px;"></div>
<div class="abs" style="left:755.5px;top:300.5px;width:94.5px;height:94.5px;background:#10c3c3;border-radius:5.5px;"></div>
<div class="t" style="left:759.9px;top:304.26px;font-size:14.1px;color:#eefcff;letter-spacing:0px;opacity:0.93;">Cosm...ss 01</div>
<svg style="left:755.5px;top:320.5px;" width="94.5" height="74" viewBox="755.5 320.5 94.5 74"><path d="M803.5,332.29 L804.36,332.97 L805.14,334 L805.86,335.06 L806.55,335.81 L807.3,335.93 L808.23,335.27 L809.23,334.51 L810.3,333.8 L810.95,334.57 L811.46,335.62 L811.91,336.68 L812.41,337.49 L813.1,337.82 L813.78,338.16 L814.45,338.53 L815.54,338.22 L816.75,337.86 L818,337.55 L818.34,338.5 L818.47,339.67 L818.52,340.81 L818.71,341.75 L819.87,341.69 L821.15,341.61 L822.46,341.59 L822.56,342.61 L822.37,343.79 L822.13,344.93 L822.07,345.89 L822.47,346.55 L823.49,346.87 L824.62,347.2 L825.75,347.59 L825.63,348.56 L825.24,349.59 L824.8,350.58 L824.55,351.46 L824.75,352.2 L824.92,352.95 L825.07,353.7 L825.19,354.45 L825.28,355.21 L825.35,355.97 L825.39,356.74 L825.4,357.5 L826.36,358.3 L827.45,359.17 L828.51,360.13 L827.76,360.91 L826.67,361.58 L825.56,362.19 L824.75,362.8 L824.55,363.54 L824.33,364.27 L824.08,364.99 L823.81,365.7 L823.51,366.41 L823.18,367.1 L822.84,367.78 L822.47,368.45 L822.07,369.11 L821.66,369.75 L821.22,370.37 L820.76,370.98 L820.28,371.58 L819.77,372.15 L819.25,372.71 L818.71,373.25 L818.15,373.77 L818.07,374.87 L818.01,376.07 L817.88,377.29 L816.89,377.35 L815.78,377.16 L814.71,376.91 L813.78,376.84 L813.1,377.18 L812.78,378.33 L812.44,379.62 L812.02,380.91 L811.01,380.62 L809.95,380 L808.94,379.33 L808.05,378.92 L807.3,379.07 L806.68,380.13 L806.01,381.34 L805.25,382.52 L804.35,381.93 L803.5,380.99 L802.71,380.02 L801.97,379.35 L801.21,379.28 L800.34,380.01 L799.38,380.85 L798.37,381.64 L797.66,380.91 L797.08,379.89 L796.56,378.86 L796.01,378.08 L795.3,377.81 L794.18,378.43 L792.94,379.15 L791.64,379.81 L791.2,378.8 L791,377.5 L790.88,376.21 L790.63,375.22 L789.44,375.49 L788.13,375.82 L786.77,376.08 L786.56,375.04 L786.63,373.79 L786.76,372.57 L786.72,371.58 L786.24,370.98 L785.02,370.93 L783.65,370.89 L782.26,370.77 L782.35,369.71 L782.77,368.52 L783.25,367.38 L783.49,366.41 L783.19,365.7 L782.92,364.99 L782.03,364.48 L781.04,363.94 L780.06,363.34 L780.31,362.43 L780.82,361.5 L781.37,360.61 L781.72,359.79 L780.65,359.1 L779.44,358.34 L778.25,357.5 L778.94,356.64 L779.98,355.86 L781.05,355.14 L781.81,354.45 L781.01,353.54 L780.1,352.53 L779.24,351.45 L780.06,350.78 L781.19,350.25 L782.34,349.8 L783.19,349.3 L783.49,348.59 L783.82,347.9 L784.16,347.22 L784.53,346.55 L784.93,345.89 L785.34,345.25 L785.03,344.08 L784.66,342.78 L784.35,341.43 L785.38,341.19 L786.63,341.21 L787.86,341.3 L788.85,341.23 L789.42,340.72 L790.02,340.24 L790.04,338.97 L790.04,337.55 L790.13,336.1 L791.22,336.22 L792.44,336.69 L793.61,337.22 L794.59,337.49 L795,336.47 L795.43,335.33 L795.93,334.19 L796.89,334.44 L797.89,334.98 L798.84,335.57 L799.7,335.93 L800.45,335.81 L801.21,335.72 L801.9,334.66 L802.66,333.46 Z M802.84,338.5 L802.1,337.49 L801.31,336.66 L800.58,336.75 L799.86,336.87 L799.24,337.47 L798.72,338.31 L798.24,339.17 L797.75,339.81 L796.86,339.25 L795.92,338.73 L794.98,338.36 L794.58,339.21 L794.37,340.33 L794.23,341.44 L793.99,342.28 L792.88,341.75 L791.72,341.28 L790.6,340.99 L790.03,341.45 L789.48,341.93 L789.33,342.83 L789.43,343.92 L789.59,344.97 L789.59,345.83 L788.42,345.72 L787.23,345.68 L786.13,345.78 L785.73,346.4 L785.36,347.02 L785,347.66 L784.67,348.32 L784.36,348.98 L784.08,349.65 L784.34,350.53 L784.91,351.46 L785.51,352.34 L785.89,353.11 L784.79,353.52 L783.69,354.01 L782.75,354.58 L783.26,355.37 L784.1,356.14 L784.97,356.85 L785.56,357.5 L784.52,358.16 L783.5,358.9 L782.66,359.69 L783.16,360.36 L783.87,360.96 L784.6,361.52 L785.14,362.08 L784.63,362.91 L784.15,363.79 L783.81,364.67 L784.08,365.35 L784.36,366.02 L785.18,366.44 L786.25,366.67 L787.32,366.84 L788.13,367.1 L787.66,368.19 L787.24,369.31 L786.99,370.4 L787.45,370.97 L788.35,371.14 L789.43,371.08 L790.5,370.96 L791.35,371 L791.2,372.16 L791.12,373.35 L791.19,374.45 L792.12,374.37 L793.2,373.98 L794.24,373.54 L795.09,373.32 L795.18,374.56 L795.35,375.81 L795.65,376.92 L796.33,377.19 L797.18,376.95 L798.07,376.44 L798.92,375.89 L799.66,375.55 L800.14,376.53 L800.69,377.5 L801.31,378.34 L802.04,378.4 L802.79,377.86 L803.5,377.02 L804.15,376.15 L804.76,375.54 L805.5,376.48 L806.3,377.4 L807.14,378.13 L807.86,377.99 L808.44,377.3 L808.9,376.33 L809.3,375.36 L809.74,374.64 L810.69,375.29 L811.69,375.9 L812.68,376.33 L813.34,376 L813.74,375.24 L813.99,374.29 L814.18,373.34 L814.46,372.58 L815.48,372.83 L816.52,373.02 L817.52,373.07 L818.05,372.57 L818.57,372.05 L819.07,371.52 L819.55,370.97 L820.01,370.4 L820.45,369.81 L820.87,369.22 L821.27,368.6 L821.64,367.98 L822,367.34 L822.33,366.68 L822.64,366.02 L822.92,365.35 L823.19,364.67 L823.42,363.97 L823.64,363.27 L823.83,362.57 L823.42,361.73 L822.69,360.88 L821.93,360.09 L821.43,359.38 L822.5,358.83 L823.56,358.2 L824.45,357.5 L824.44,356.77 L824.4,356.04 L824.34,355.31 L824.25,354.58 L824.13,353.86 L823.99,353.14 L823.83,352.43 L823.64,351.73 L823,351.16 L822.15,350.71 L821.28,350.32 L820.62,349.88 L821.04,348.95 L821.41,347.98 L821.64,347.02 L821.27,346.4 L820.44,346.07 L819.41,345.94 L818.39,345.87 L817.58,345.68 L817.83,344.6 L818.02,343.48 L818.05,342.43 L817.19,342.3 L816.17,342.4 L815.17,342.56 L814.35,342.56 L814.31,341.47 L814.21,340.37 L813.98,339.36 L813.34,339 L812.68,338.67 L812.02,338.36 L811.16,338.54 L810.24,338.98 L809.36,339.46 L808.59,339.75 L808.18,338.74 L807.7,337.74 L807.14,336.87 L806.42,336.75 L805.63,337.26 L804.86,338.09 L804.15,338.94 L803.5,339.53 Z" fill="#d2fafb" fill-opacity="0.86" fill-rule="evenodd" stroke="#d2fafb" stroke-opacity="0.5" stroke-width="0.4" stroke-linejoin="round"/></svg>
<div class="abs" style="left:856px;top:300.5px;width:94.5px;height:94.5px;background:#10c3c3;border-radius:5.5px;"></div>
<div class="t" style="left:860.4px;top:304.26px;font-size:14.1px;color:#eefcff;letter-spacing:0px;opacity:0.93;">Hidde...ss 01</div>
<svg style="left:856px;top:320.5px;" width="94.5" height="74" viewBox="856 320.5 94.5 74"><circle cx="904" cy="357.8" r="21.8" fill="none" stroke="#d2fafb" stroke-opacity="0.85" stroke-width="1.0"/><circle cx="904" cy="357.8" r="21.8" fill="none" stroke="#d2fafb" stroke-opacity="0.9" stroke-width="3" stroke-linecap="round" stroke-dasharray="0.01 4.56"/></svg>
<div class="abs" style="left:956.5px;top:300.5px;width:94.5px;height:94.5px;background:#151518;border-radius:5.5px;"></div>
<div class="abs" style="left:1057px;top:300.5px;width:94.5px;height:94.5px;background:#151518;border-radius:5.5px;"></div>
<div class="abs" style="left:1157.5px;top:300.5px;width:94.5px;height:94.5px;background:#10c3c3;border-radius:5.5px;"></div>
<div class="t" style="left:1161.9px;top:303.71px;font-size:14.75px;color:#eefcff;letter-spacing:0px;opacity:0.93;">Metal...Synth</div>
<svg style="left:1157.5px;top:320.5px;" width="94.5" height="74" viewBox="1157.5 320.5 94.5 74"><path d="M1205.5,331.76 L1206.38,332.31 L1207.26,332.39 L1208.06,333.13 L1209.06,332.18 L1209.88,332.64 L1210.68,333.13 L1211.07,335.16 L1211.54,336.45 L1212.27,336.67 L1212.99,336.92 L1213.7,337.19 L1214.41,337.49 L1215.1,337.82 L1215.78,338.16 L1216.8,337.93 L1218.22,337.14 L1219.38,336.92 L1219.63,338.05 L1220.21,338.67 L1220.12,340.07 L1220.15,341.23 L1220.71,341.75 L1221.67,341.88 L1222.78,341.94 L1223.89,342.07 L1224.51,342.64 L1225.17,343.21 L1225.44,344.05 L1226.16,344.59 L1225.82,345.77 L1225.91,346.65 L1225.71,347.64 L1225.51,348.59 L1225.81,349.3 L1226.91,349.71 L1227.83,350.25 L1229.18,350.71 L1228.94,351.66 L1228.97,352.51 L1227.8,353.57 L1227.19,354.45 L1228.38,355.1 L1230.07,355.78 L1230.64,356.62 L1230.5,357.5 L1229.8,358.35 L1228.51,359.11 L1227.28,359.79 L1227.19,360.55 L1227.07,361.3 L1226.92,362.05 L1227.55,363 L1228.83,364.19 L1229.4,365.27 L1228.67,365.93 L1227.8,366.51 L1226.5,366.85 L1225.18,367.1 L1225.53,368.15 L1226.35,369.54 L1226.88,370.86 L1226.79,371.86 L1225.72,372.19 L1224.5,372.35 L1222.98,372.17 L1221.77,372.15 L1221.25,372.71 L1221.29,373.85 L1221.52,375.3 L1221.89,377.03 L1221.27,377.68 L1220.15,377.67 L1219.65,378.48 L1218.16,377.77 L1216.86,377.18 L1215.78,376.84 L1215.43,377.86 L1215.13,379.14 L1214.67,380.2 L1213.74,380.13 L1212.84,380.08 L1211.76,379.33 L1210.8,378.75 L1210.05,378.92 L1209.3,379.07 L1208.55,379.19 L1207.86,379.97 L1207.13,380.78 L1206.36,382.08 L1205.5,382.5 L1204.6,383.31 L1203.73,382.81 L1202.93,381.98 L1202.13,381.47 L1201.39,380.79 L1200.79,379.64 L1200.2,378.75 L1199.21,379.42 L1198.06,380.4 L1196.97,380.93 L1196.03,380.95 L1195.39,380.2 L1194.84,379.35 L1194.72,377.77 L1194.55,376.47 L1193.89,376.07 L1193.25,375.66 L1192.63,375.22 L1191.69,375.18 L1190.63,375.22 L1189.45,375.32 L1188.52,375.08 L1188.28,374.13 L1187.73,373.5 L1187.57,372.55 L1187.74,371.37 L1187.78,370.37 L1187.34,369.75 L1186.93,369.11 L1186.53,368.45 L1186.16,367.78 L1185.27,367.36 L1183.9,367.12 L1183.21,366.51 L1182.56,365.85 L1181.36,365.34 L1181.08,364.5 L1181.78,363.41 L1181.6,362.58 L1182.25,361.6 L1183.24,360.63 L1183.72,359.79 L1183.65,359.03 L1183.61,358.26 L1183.6,357.5 L1183.61,356.74 L1182.94,355.92 L1181.74,355 L1181.7,354.16 L1180.54,353.1 L1180.81,352.25 L1181.76,351.58 L1182.76,350.98 L1183.99,350.51 L1184.92,350.01 L1185.19,349.3 L1185.49,348.59 L1185.82,347.9 L1185.62,346.93 L1185,345.67 L1184.98,344.68 L1185.22,343.82 L1185.81,343.2 L1187.12,343.14 L1188.18,342.97 L1189.23,342.85 L1189.75,342.29 L1189.76,341.2 L1189.61,339.86 L1189.75,338.73 L1190,337.66 L1191.18,337.79 L1191.81,337.21 L1192.95,337.42 L1194.18,337.9 L1195.22,338.16 L1195.9,337.82 L1196.59,337.49 L1197.09,336.69 L1197.59,335.75 L1198.08,334.65 L1198.83,334.25 L1199.71,334.29 L1200.62,334.56 L1201.6,335.39 L1202.45,335.81 L1203.21,335.72 L1203.9,334.55 L1204.64,332.79 Z M1204.86,339.1 L1204.11,337.59 L1203.31,336.66 L1202.58,336.75 L1201.95,337.35 L1201.43,338.37 L1200.87,338.94 L1200.29,339.34 L1199.62,339.39 L1198.72,338.86 L1197.84,338.53 L1196.98,338.36 L1196.32,338.67 L1195.66,339 L1195.36,339.93 L1195.25,341.09 L1195.08,342.05 L1194.49,342.34 L1194.42,343.32 L1193.54,343.24 L1192.59,343.16 L1191.42,342.92 L1190.43,342.95 L1189.93,343.48 L1189.94,344.44 L1190,345.39 L1190.33,346.47 L1190.04,347.07 L1189.49,347.49 L1188.73,347.82 L1187.49,347.92 L1186.67,348.32 L1186.36,348.98 L1186.08,349.65 L1185.81,350.33 L1186.19,351.22 L1186.88,352.16 L1187.41,352.99 L1187.95,353.77 L1187.92,354.4 L1186.65,354.85 L1186.44,355.5 L1185.24,356.08 L1184.56,356.77 L1184.55,357.5 L1184.56,358.23 L1184.6,358.96 L1184.66,359.69 L1185.27,360.34 L1186.39,360.87 L1187.24,361.38 L1187.4,362.01 L1188.4,362.4 L1188.56,363 L1187.94,363.89 L1187.86,364.63 L1187.8,365.38 L1187.16,366.45 L1187,367.34 L1187.36,367.98 L1187.73,368.6 L1188.13,369.22 L1188.55,369.81 L1189.44,370.05 L1190.49,370.09 L1191.28,370.31 L1191.75,370.78 L1192.53,370.93 L1192.74,371.68 L1192.75,372.7 L1192.9,373.63 L1193.19,374.45 L1193.78,374.87 L1194.4,375.27 L1195.03,375.64 L1196.11,375.16 L1197.27,374.38 L1198.06,374.21 L1198.79,374.1 L1199.27,374.62 L1199.63,375.56 L1199.95,376.86 L1200.43,377.83 L1201.28,377.35 L1202.14,376.58 L1202.87,376.19 L1203.57,375.91 L1204.26,375.28 L1204.89,374.91 L1205.5,375.66 L1206.15,376.01 L1206.87,377.11 L1207.62,377.72 L1208.42,378.25 L1209.14,378.13 L1209.86,377.99 L1210.57,377.83 L1211.07,376.94 L1211.46,375.85 L1211.99,375.34 L1212.48,374.77 L1213.37,375.17 L1214.39,375.72 L1215.34,376 L1215.6,375 L1215.65,373.74 L1215.5,372.33 L1216.21,372.24 L1216.34,371.38 L1216.89,371.07 L1218.28,371.7 L1219.54,372.03 L1220.57,372.05 L1221.07,371.52 L1220.92,370.44 L1220.44,369.17 L1220.2,368.18 L1220.04,367.31 L1220.74,367.02 L1221.95,367 L1223.37,367 L1224.33,366.68 L1223.75,365.62 L1223.13,364.62 L1222.86,363.82 L1222.66,363.08 L1223.59,362.69 L1225.11,362.39 L1225.99,361.86 L1226.13,361.14 L1226.25,360.42 L1226.34,359.69 L1225.35,358.89 L1224.26,358.16 L1223.66,357.5 L1223.51,356.87 L1223.95,356.21 L1225.35,355.41 L1226.25,354.58 L1225.47,353.98 L1224.15,353.54 L1223.86,352.92 L1223.28,352.4 L1224.08,351.46 L1224.44,350.61 L1224.92,349.65 L1224.64,348.98 L1223.86,348.55 L1223.03,348.18 L1222.42,347.73 L1221.38,347.57 L1221.26,346.87 L1220.7,346.46 L1220.43,345.84 L1220.09,345.25 L1220.16,344.3 L1220.19,343.31 L1220.05,342.43 L1219.52,341.93 L1218.48,342.04 L1217.29,342.41 L1216.68,342.11 L1215.75,342.31 L1215.6,341.34 L1215.66,339.9 L1215.34,339 L1214.68,338.67 L1214.02,338.36 L1213.35,338.08 L1212.67,337.81 L1211.97,337.58 L1211.27,337.36 L1210.32,338.15 L1209.29,339.66 L1208.62,339.83 L1207.96,340.02 L1207.45,338.99 L1206.76,339.54 L1206.13,339.53 L1205.5,340 Z" fill="#d2fafb" fill-opacity="0.86" fill-rule="evenodd" stroke="#d2fafb" stroke-opacity="0.5" stroke-width="0.4" stroke-linejoin="round"/></svg>
<div class="abs" style="left:1258px;top:300.5px;width:94.5px;height:94.5px;background:#151518;border-radius:5.5px;"></div>
<div class="abs" style="left:1358.5px;top:300.5px;width:94.5px;height:94.5px;background:#10c3c3;border-radius:5.5px;"></div>
<div class="t" style="left:1362.9px;top:303.84px;font-size:14.6px;color:#eefcff;letter-spacing:0px;opacity:0.93;">Artifi...Bass</div>
<svg style="left:1358.5px;top:320.5px;" width="94.5" height="74" viewBox="1358.5 320.5 94.5 74"><path d="M1406.5,332.36 L1407.83,334.28 L1409.38,332.41 L1410.5,334.39 L1412.11,333.36 L1413.01,335.33 L1414.44,335.25 L1415.43,336.36 L1417.34,335.46 L1418.03,337.08 L1419.38,337.46 L1419.76,339.26 L1423.59,336.6 L1422.42,340.15 L1423.69,340.79 L1423.8,342.51 L1425.82,342.6 L1426.02,344.16 L1427.21,345.01 L1427.27,346.54 L1430.39,346.59 L1427.97,349.14 L1430.58,349.68 L1428.82,351.63 L1429.88,352.76 L1429.8,354.15 L1430.47,355.44 L1429.24,356.85 L1433.49,358.27 L1429.82,359.5 L1430.17,360.9 L1429.41,362.14 L1431.46,364.06 L1428.84,364.76 L1429.97,366.64 L1427.94,367.29 L1428.72,369.23 L1426.23,369.4 L1428.79,372.74 L1424.69,371.52 L1424.83,373.38 L1423.25,373.78 L1423.76,376.3 L1421.12,375.37 L1422.21,379.12 L1418.81,376.65 L1419.27,380.11 L1416.76,378.36 L1415.96,379.9 L1414.2,379.09 L1413.84,382.51 L1411.76,380.11 L1410.61,381.23 L1409.07,379.93 L1407.95,382.89 L1406.5,380.45 L1405.07,382.47 L1403.81,380.92 L1402.16,382.6 L1401.13,380.57 L1399.27,382.13 L1398.58,379.69 L1396.75,380.58 L1396.44,377.96 L1394.55,378.66 L1394.29,376.5 L1391.95,377.53 L1391.89,375.37 L1390.27,375.19 L1390.14,373.4 L1388.12,373.42 L1388.52,371.36 L1384.99,372.21 L1386.31,369.68 L1382.62,370.1 L1385.51,367.09 L1384.42,366.1 L1384.5,364.65 L1383.6,363.52 L1384.2,362.02 L1381.38,361.11 L1383.03,359.52 L1381.56,358.21 L1383.31,356.84 L1382.24,355.42 L1383.59,354.21 L1382.92,352.72 L1384.73,351.78 L1382.21,349.61 L1385.51,349.33 L1382.42,346.51 L1385.7,346.52 L1384.71,344.36 L1387.53,344.53 L1385.12,341.01 L1389.37,342.66 L1388.8,340.29 L1391.27,340.9 L1390.67,338.14 L1392.66,338.46 L1393.38,337.08 L1395.12,337.35 L1395.65,335.43 L1397.64,336.53 L1398.4,334.79 L1400.03,335.48 L1401.05,334.05 L1402.65,335.27 L1403.72,333.25 L1405.16,334.11 Z M1405.38,337.96 L1404.37,338.93 L1403.03,337.44 L1402.2,339 L1400.86,338.31 L1400.13,339.64 L1398.65,338.92 L1398.33,340.88 L1396.75,340.23 L1396.33,341.67 L1395.05,341.75 L1395.01,343.45 L1392.72,342.48 L1393.27,344.65 L1391.18,344.23 L1393.54,347.51 L1390.01,346.23 L1391.29,348.33 L1389.26,348.4 L1391.18,350.5 L1387.5,350.1 L1389.69,352.04 L1386.77,352.31 L1387.87,353.73 L1386.87,354.68 L1387.83,355.9 L1386.73,356.94 L1388.3,358.02 L1387.11,359.17 L1388.86,360.04 L1386.72,361.51 L1387.78,362.42 L1387.63,363.63 L1388.48,364.51 L1388.4,365.76 L1392.03,365.13 L1389.85,367.54 L1392.29,367.21 L1390.48,369.85 L1392.31,369.79 L1392.06,371.53 L1393.62,371.54 L1393.91,372.9 L1395.7,372.37 L1395.51,374.61 L1397.26,373.86 L1397.61,375.58 L1399.45,374.18 L1399.96,375.82 L1401.55,374.34 L1402.12,376.34 L1403.48,374.97 L1404.28,376.81 L1405.46,375.62 L1406.5,377.51 L1407.51,375.25 L1408.82,377.71 L1409.74,376.21 L1410.98,376.75 L1411.35,374 L1413.23,376.37 L1413.81,374.8 L1415.21,375.21 L1415,372.55 L1417.4,374.47 L1416.26,370.94 L1419.08,372.89 L1418.46,370.53 L1420.58,371.18 L1420.73,369.83 L1422.33,369.71 L1420,366.73 L1423.56,367.79 L1422.46,365.92 L1424.19,365.58 L1423.27,364.03 L1425.06,363.53 L1423.36,361.93 L1425.73,361.4 L1425.44,360.22 L1426.02,359.18 L1422.85,357.97 L1426.68,356.92 L1425.44,355.87 L1425.78,354.73 L1425.31,353.69 L1425.73,352.44 L1423.5,351.98 L1425.06,350.27 L1421.98,350.43 L1423.77,348.39 L1422.68,347.75 L1422.5,346.56 L1421.31,346.08 L1421.66,344.37 L1420.19,344.2 L1419.66,343.16 L1416.86,344.84 L1418.47,341.02 L1416.89,341.33 L1416.11,340.47 L1414.69,340.85 L1414.29,339.07 L1413.02,339.23 L1412.1,338.44 L1410.66,339.62 L1409.83,338.23 L1408.54,339.69 L1407.63,337.81 L1406.5,339.47 Z" fill="#d2fafb" fill-opacity="0.86" fill-rule="evenodd" stroke="#d2fafb" stroke-opacity="0.5" stroke-width="0.4" stroke-linejoin="round"/></svg>
<div class="abs" style="left:554.5px;top:401px;width:94.5px;height:94.5px;background:#151518;border-radius:5.5px;"></div>
<div class="abs" style="left:655px;top:401px;width:94.5px;height:94.5px;background:#151518;border-radius:5.5px;"></div>
<div class="abs" style="left:755.5px;top:401px;width:94.5px;height:94.5px;background:#151518;border-radius:5.5px;"></div>
<div class="abs" style="left:856px;top:401px;width:94.5px;height:94.5px;background:#1985a0;border-radius:5.5px;"></div>
<div class="t" style="left:860.4px;top:404.51px;font-size:14.4px;color:#eefcff;letter-spacing:0.22px;opacity:0.93;">Midni...th 02</div>
<svg style="left:856px;top:421px;" width="94.5" height="74" viewBox="856 421 94.5 74"><g fill="none" stroke="#d3eef5" stroke-opacity="0.8" stroke-width="1.35" stroke-linecap="butt"><circle cx="904" cy="458.3" r="28.8" stroke-dasharray="134.92 1.6 44.44 0"/><circle cx="904" cy="458.3" r="21.8" stroke-dasharray="101.93 1.6 33.44 0"/><circle cx="904" cy="458.3" r="11.6" stroke-dasharray="8 1.2 26 2 14 2.5 16 3.2"/></g></svg>
<div class="abs" style="left:956.5px;top:401px;width:94.5px;height:94.5px;background:#1985a0;border-radius:5.5px;"></div>
<div class="t" style="left:960.9px;top:404.51px;font-size:14.4px;color:#eefcff;letter-spacing:0.22px;opacity:0.93;">Midni...th 02</div>
<svg style="left:956.5px;top:421px;" width="94.5" height="74" viewBox="956.5 421 94.5 74"><g fill="none" stroke="#d3eef5" stroke-opacity="0.8" stroke-width="1.35" stroke-linecap="butt"><circle cx="1004.5" cy="458.3" r="28.8" stroke-dasharray="20.1 25.1 89.5 2 44.3 0"/><circle cx="1004.5" cy="458.3" r="21.8" stroke-dasharray="101.93 1.6 33.44 0"/><circle cx="1004.5" cy="458.3" r="11.6" stroke-dasharray="9 3 3 5 2 6 12 4 10 3 8 2 3 2.9"/><path d="M1005.5,475.3 a17.2,17.2 0 0 0 10,-4.2" /></g></svg>
<div class="abs" style="left:1057px;top:401px;width:94.5px;height:94.5px;background:#1985a0;border-radius:5.5px;"></div>
<div class="t" style="left:1061.4px;top:404.51px;font-size:14.4px;color:#eefcff;letter-spacing:0.22px;opacity:0.93;">Midni...th 01</div>
<svg style="left:1057px;top:421px;" width="94.5" height="74" viewBox="1057 421 94.5 74"><g fill="none" stroke="#d3eef5" stroke-opacity="0.8" stroke-width="1.35" stroke-linecap="butt"><circle cx="1105" cy="458.3" r="28.8" stroke-dasharray="134.92 1.6 44.44 0"/><circle cx="1105" cy="458.3" r="21.8" stroke-dasharray="101.93 1.6 33.44 0"/><circle cx="1105" cy="458.3" r="11.6" stroke-dasharray="3 4 2 5 10 6 8 5 6 4 14 5.9"/><circle cx="1105" cy="458.3" r="17" stroke-dasharray="0 22 12 8 0 26 12 6 0 10 10 0.8"/></g></svg>
<div class="abs" style="left:1157.5px;top:401px;width:94.5px;height:94.5px;background:#151518;border-radius:5.5px;"></div>
<div class="abs" style="left:1258px;top:401px;width:94.5px;height:94.5px;background:#151518;border-radius:5.5px;"></div>
<div class="abs" style="left:1358.5px;top:401px;width:94.5px;height:94.5px;background:#151518;border-radius:5.5px;"></div>
<div class="abs" style="left:554.5px;top:501.5px;width:94.5px;height:94.5px;background:#151518;border-radius:5.5px;"></div>
<div class="abs" style="left:655px;top:501.5px;width:94.5px;height:94.5px;background:#366aa5;border-radius:5.5px;"></div>
<div class="t" style="left:659.4px;top:505.01px;font-size:14.4px;color:#eefcff;letter-spacing:0.06px;opacity:0.93;">FM P...ion 01</div>
<svg style="left:655px;top:521.5px;" width="94.5" height="74" viewBox="655 521.5 94.5 74"><circle cx="703" cy="558" r="5.4" fill="#2f62a0" fill-opacity="0.55"/><g fill="none" stroke="#d8e8fc" stroke-linecap="round"><circle cx="703" cy="558" r="6.9" stroke-opacity="0.6" stroke-width="0.9"/><circle cx="703" cy="558" r="9.6" stroke-opacity="0.78" stroke-width="0.95" stroke-dasharray="0.01 1.9"/><circle cx="703" cy="558" r="12.1" stroke-opacity="0.78" stroke-width="0.95" stroke-dasharray="0.01 1.9"/><circle cx="703" cy="558" r="14.6" stroke-opacity="0.78" stroke-width="0.95" stroke-dasharray="0.01 1.75"/><circle cx="703" cy="558" r="17.1" stroke-opacity="0.78" stroke-width="0.95" stroke-dasharray="0.01 1.75"/><circle cx="703" cy="558" r="19.6" stroke-opacity="0.78" stroke-width="0.95" stroke-dasharray="0.01 1.75"/><circle cx="703" cy="558" r="22.1" stroke-opacity="0.78" stroke-width="0.95" stroke-dasharray="0.01 1.75"/><circle cx="703" cy="558" r="24.6" stroke-opacity="0.78" stroke-width="0.95" stroke-dasharray="0.01 1.75"/><circle cx="703" cy="558" r="27.1" stroke-opacity="0.78" stroke-width="0.95" stroke-dasharray="0.01 1.75"/><circle cx="703" cy="558" r="29.6" stroke-opacity="0.78" stroke-width="0.95" stroke-dasharray="0.01 1.75"/></g><g fill="#eef5ff" fill-opacity="0.95"><circle cx="691.8" cy="533.32" r="1.01"/><circle cx="698.21" cy="531.33" r="1.27"/><circle cx="708.28" cy="528.88" r="1.35"/><circle cx="720.15" cy="533.87" r="1.36"/><circle cx="723.23" cy="539.97" r="1.25"/><circle cx="728.72" cy="549.45" r="1.07"/><circle cx="732.05" cy="563.67" r="1.39"/><circle cx="727.41" cy="574.74" r="1.33"/><circle cx="716.05" cy="584.57" r="1.35"/><circle cx="705.36" cy="587.51" r="1.3"/><circle cx="696.21" cy="586.81" r="1.07"/><circle cx="687.81" cy="580.44" r="1.18"/><circle cx="679.32" cy="571.18" r="1.08"/><circle cx="674.12" cy="564.49" r="1.23"/><circle cx="674.17" cy="551.29" r="1.04"/><circle cx="679.4" cy="540.14" r="1.34"/><circle cx="684.62" cy="534.8" r="1.39"/><circle cx="712.99" cy="541.14" r="0.9"/><circle cx="722.17" cy="553.9" r="0.9"/><circle cx="718.67" cy="573.58" r="0.9"/><circle cx="694.48" cy="572.82" r="0.9"/><circle cx="688.24" cy="566.63" r="0.9"/><circle cx="685.43" cy="544.6" r="0.9"/></g></svg>
<div class="abs" style="left:755.5px;top:501.5px;width:94.5px;height:94.5px;background:#366aa5;border-radius:5.5px;"></div>
<div class="t" style="left:759.9px;top:505.01px;font-size:14.4px;color:#eefcff;letter-spacing:0.06px;opacity:0.93;">FM P...on 02</div>
<svg style="left:755.5px;top:521.5px;" width="94.5" height="74" viewBox="755.5 521.5 94.5 74"><circle cx="803.5" cy="558" r="5.4" fill="#2f62a0" fill-opacity="0.55"/><g fill="none" stroke="#d8e8fc" stroke-linecap="round"><circle cx="803.5" cy="558" r="6.9" stroke-opacity="0.6" stroke-width="0.9"/><circle cx="803.5" cy="558" r="9.6" stroke-opacity="0.78" stroke-width="0.95" stroke-dasharray="0.01 1.9"/><circle cx="803.5" cy="558" r="12.1" stroke-opacity="0.78" stroke-width="0.95" stroke-dasharray="0.01 1.9"/><circle cx="803.5" cy="558" r="14.6" stroke-opacity="0.78" stroke-width="0.95" stroke-dasharray="0.01 1.75"/><circle cx="803.5" cy="558" r="17.1" stroke-opacity="0.78" stroke-width="0.95" stroke-dasharray="0.01 1.75"/><circle cx="803.5" cy="558" r="19.6" stroke-opacity="0.78" stroke-width="0.95" stroke-dasharray="0.01 1.75"/><circle cx="803.5" cy="558" r="22.1" stroke-opacity="0.78" stroke-width="0.95" stroke-dasharray="0.01 1.75"/><circle cx="803.5" cy="558" r="24.6" stroke-opacity="0.78" stroke-width="0.95" stroke-dasharray="0.01 1.75"/><circle cx="803.5" cy="558" r="27.1" stroke-opacity="0.78" stroke-width="0.95" stroke-dasharray="0.01 1.75"/><circle cx="803.5" cy="558" r="29.6" stroke-opacity="0.78" stroke-width="0.95" stroke-dasharray="0.01 1.75"/></g><g fill="#eef5ff" fill-opacity="0.95"><circle cx="790.9" cy="531.21" r="1.07"/><circle cx="801.51" cy="528.47" r="1.28"/><circle cx="810.93" cy="529.35" r="1.29"/><circle cx="819.72" cy="536.29" r="1.26"/><circle cx="827.86" cy="541.19" r="1.06"/><circle cx="828.71" cy="548.07" r="1.07"/><circle cx="830.05" cy="563.42" r="1.02"/><circle cx="825.89" cy="577.36" r="1.35"/><circle cx="816.75" cy="584.47" r="1.29"/><circle cx="806.43" cy="587.45" r="1.27"/><circle cx="797.76" cy="584.48" r="1.28"/><circle cx="784.16" cy="580.41" r="1.13"/><circle cx="780.72" cy="572.68" r="1.07"/><circle cx="776.67" cy="561.83" r="1.12"/><circle cx="776.69" cy="554.01" r="1.16"/><circle cx="780.06" cy="539.93" r="1.16"/><circle cx="783.39" cy="536.28" r="1.18"/><circle cx="811.93" cy="540.31" r="0.9"/><circle cx="822.5" cy="553.18" r="0.9"/><circle cx="814.27" cy="571.28" r="0.9"/><circle cx="795.61" cy="575.94" r="0.9"/><circle cx="788.37" cy="565.97" r="0.9"/><circle cx="785.44" cy="545.26" r="0.9"/><circle cx="813.37" cy="552.3" r="1.0"/><circle cx="814.79" cy="556.41" r="1.0"/><circle cx="814.56" cy="560.76" r="1.0"/><circle cx="812.72" cy="564.7" r="1.0"/><circle cx="809.54" cy="567.67" r="1.0"/><circle cx="805.48" cy="569.23" r="1.0"/><circle cx="801.13" cy="569.15" r="1.0"/><circle cx="797.13" cy="567.45" r="1.0"/><circle cx="794.05" cy="564.37" r="1.0"/></g></svg>
<div class="abs" style="left:856px;top:501.5px;width:94.5px;height:94.5px;background:#366aa5;border-radius:5.5px;"></div>
<div class="t" style="left:860.4px;top:505.01px;font-size:14.4px;color:#eefcff;letter-spacing:0.06px;opacity:0.93;">FM P...on 03</div>
<svg style="left:856px;top:521.5px;" width="94.5" height="74" viewBox="856 521.5 94.5 74"><circle cx="904" cy="558" r="5.4" fill="#2f62a0" fill-opacity="0.55"/><g fill="none" stroke="#d8e8fc" stroke-linecap="round"><circle cx="904" cy="558" r="6.9" stroke-opacity="0.6" stroke-width="0.9"/><circle cx="904" cy="558" r="9.6" stroke-opacity="0.78" stroke-width="0.95" stroke-dasharray="0.01 1.9"/><circle cx="904" cy="558" r="12.1" stroke-opacity="0.78" stroke-width="0.95" stroke-dasharray="0.01 1.9"/><circle cx="904" cy="558" r="14.6" stroke-opacity="0.78" stroke-width="0.95" stroke-dasharray="0.01 1.75"/><circle cx="904" cy="558" r="17.1" stroke-opacity="0.78" stroke-width="0.95" stroke-dasharray="0.01 1.75"/><circle cx="904" cy="558" r="19.6" stroke-opacity="0.78" stroke-width="0.95" stroke-dasharray="0.01 1.75"/><circle cx="904" cy="558" r="22.1" stroke-opacity="0.78" stroke-width="0.95" stroke-dasharray="0.01 1.75"/><circle cx="904" cy="558" r="24.6" stroke-opacity="0.78" stroke-width="0.95" stroke-dasharray="0.01 1.75"/><circle cx="904" cy="558" r="27.1" stroke-opacity="0.78" stroke-width="0.95" stroke-dasharray="0.01 1.75"/><circle cx="904" cy="558" r="29.6" stroke-opacity="0.78" stroke-width="0.95" stroke-dasharray="0.01 1.75"/></g><g fill="#eef5ff" fill-opacity="0.95"><circle cx="892.62" cy="530.67" r="1.11"/><circle cx="898.94" cy="531.38" r="1.27"/><circle cx="913.11" cy="529.84" r="1.17"/><circle cx="919.38" cy="532.71" r="1.2"/><circle cx="925.74" cy="537.91" r="1.26"/><circle cx="932.22" cy="549.07" r="1.24"/><circle cx="932.83" cy="564.71" r="1.32"/><circle cx="926.68" cy="577.02" r="1.06"/><circle cx="916.71" cy="584.73" r="1.04"/><circle cx="909.65" cy="584.5" r="1.24"/><circle cx="895.15" cy="583.61" r="1.21"/><circle cx="884.69" cy="580.43" r="1.22"/><circle cx="880.7" cy="571.84" r="1.34"/><circle cx="877.42" cy="563.28" r="1.02"/><circle cx="874.79" cy="553.23" r="1.03"/><circle cx="879.27" cy="541.74" r="1.11"/><circle cx="886.33" cy="534.25" r="1.15"/><circle cx="908.42" cy="538.9" r="0.9"/><circle cx="925.75" cy="554.1" r="0.9"/><circle cx="917.13" cy="575.78" r="0.9"/><circle cx="895.28" cy="578.31" r="0.9"/><circle cx="887.44" cy="562.28" r="0.9"/><circle cx="886.87" cy="548.47" r="0.9"/><circle cx="904" cy="547.4" r="1.0"/><circle cx="908.6" cy="548.45" r="1.0"/><circle cx="912.29" cy="551.39" r="1.0"/><circle cx="914.33" cy="555.64" r="1.0"/><circle cx="914.33" cy="560.36" r="1.0"/><circle cx="912.29" cy="564.61" r="1.0"/><circle cx="908.6" cy="567.55" r="1.0"/><circle cx="904" cy="568.6" r="1.0"/><circle cx="899.4" cy="567.55" r="1.0"/><circle cx="895.71" cy="564.61" r="1.0"/><circle cx="893.67" cy="560.36" r="1.0"/><circle cx="893.67" cy="555.64" r="1.0"/><circle cx="895.71" cy="551.39" r="1.0"/><circle cx="899.4" cy="548.45" r="1.0"/></g></svg>
<div class="abs" style="left:956.5px;top:501.5px;width:94.5px;height:94.5px;background:#151518;border-radius:5.5px;"></div>
<div class="abs" style="left:1057px;top:501.5px;width:94.5px;height:94.5px;background:#151518;border-radius:5.5px;"></div>
<div class="abs" style="left:1157.5px;top:501.5px;width:94.5px;height:94.5px;background:#151518;border-radius:5.5px;"></div>
<div class="abs" style="left:1258px;top:501.5px;width:94.5px;height:94.5px;background:#366aa5;border-radius:5.5px;"></div>
<div class="t" style="left:1262.4px;top:505.01px;font-size:14.4px;color:#eefcff;letter-spacing:0.06px;opacity:0.93;">FM P...on 04</div>
<svg style="left:1258px;top:521.5px;" width="94.5" height="74" viewBox="1258 521.5 94.5 74"><g fill="#cfe2fa"><circle cx="1300.82" cy="568.86" r="0.77" fill-opacity="0.55"/><circle cx="1324.1" cy="565.41" r="0.52" fill-opacity="0.59"/><circle cx="1322.4" cy="566.2" r="0.56" fill-opacity="0.47"/><circle cx="1295.59" cy="547.76" r="0.79" fill-opacity="0.57"/><circle cx="1332.63" cy="554.5" r="0.57" fill-opacity="0.41"/><circle cx="1300.99" cy="571.52" r="0.59" fill-opacity="0.67"/><circle cx="1298.36" cy="549.39" r="0.53" fill-opacity="0.46"/><circle cx="1299.57" cy="544.74" r="0.66" fill-opacity="0.67"/><circle cx="1293.84" cy="562.18" r="0.62" fill-opacity="0.67"/><circle cx="1277.36" cy="553.93" r="0.86" fill-opacity="0.51"/><circle cx="1321.91" cy="556.51" r="0.58" fill-opacity="0.62"/><circle cx="1320.05" cy="562.03" r="0.88" fill-opacity="0.67"/><circle cx="1314.91" cy="549.64" r="0.79" fill-opacity="0.6"/><circle cx="1319.93" cy="536.53" r="0.74" fill-opacity="0.72"/><circle cx="1318.6" cy="563.55" r="0.91" fill-opacity="0.51"/><circle cx="1288.49" cy="573.79" r="0.51" fill-opacity="0.6"/><circle cx="1310.68" cy="566.77" r="0.56" fill-opacity="0.49"/><circle cx="1298.25" cy="564.84" r="0.54" fill-opacity="0.6"/><circle cx="1282.4" cy="550.92" r="0.64" fill-opacity="0.58"/><circle cx="1291.38" cy="576.46" r="0.98" fill-opacity="0.43"/><circle cx="1308.21" cy="562.93" r="0.79" fill-opacity="0.49"/><circle cx="1318.76" cy="558.83" r="0.68" fill-opacity="0.66"/><circle cx="1316.2" cy="555.4" r="0.84" fill-opacity="0.38"/><circle cx="1322.8" cy="546.22" r="0.94" fill-opacity="0.79"/><circle cx="1298.22" cy="564.74" r="0.53" fill-opacity="0.39"/><circle cx="1307.26" cy="563.24" r="0.67" fill-opacity="0.38"/><circle cx="1312.4" cy="558.51" r="0.51" fill-opacity="0.83"/><circle cx="1301.41" cy="554.51" r="0.63" fill-opacity="0.54"/><circle cx="1288.87" cy="578.14" r="0.73" fill-opacity="0.62"/><circle cx="1321.82" cy="567.98" r="0.67" fill-opacity="0.5"/><circle cx="1310.32" cy="550.5" r="0.76" fill-opacity="0.43"/><circle cx="1303.49" cy="557.8" r="0.76" fill-opacity="0.89"/><circle cx="1310.11" cy="553.74" r="0.58" fill-opacity="0.77"/><circle cx="1290.56" cy="555.29" r="0.66" fill-opacity="0.47"/><circle cx="1309.47" cy="550.93" r="0.61" fill-opacity="0.63"/><circle cx="1302.75" cy="562.66" r="0.63" fill-opacity="0.73"/><circle cx="1309.98" cy="557.38" r="0.97" fill-opacity="0.89"/><circle cx="1313.55" cy="556.31" r="0.6" fill-opacity="0.46"/><circle cx="1295.97" cy="548.59" r="0.92" fill-opacity="0.61"/><circle cx="1302.01" cy="552.79" r="0.95" fill-opacity="0.78"/><circle cx="1306.01" cy="549.47" r="0.59" fill-opacity="0.78"/><circle cx="1299.03" cy="570.71" r="0.7" fill-opacity="0.87"/><circle cx="1321.96" cy="574.87" r="0.57" fill-opacity="0.8"/><circle cx="1333.97" cy="555.02" r="0.68" fill-opacity="0.65"/><circle cx="1295.59" cy="556.74" r="0.72" fill-opacity="0.83"/><circle cx="1308.18" cy="554.29" r="0.62" fill-opacity="0.67"/><circle cx="1305.24" cy="571.44" r="0.57" fill-opacity="0.85"/><circle cx="1291.53" cy="577.45" r="0.71" fill-opacity="0.85"/><circle cx="1297.28" cy="558.41" r="0.76" fill-opacity="0.36"/><circle cx="1299.62" cy="561.02" r="0.59" fill-opacity="0.61"/><circle cx="1305.15" cy="553.06" r="0.66" fill-opacity="0.64"/><circle cx="1300.55" cy="556.52" r="0.62" fill-opacity="0.5"/><circle cx="1307.4" cy="548.52" r="0.78" fill-opacity="0.77"/><circle cx="1323.75" cy="547.62" r="0.76" fill-opacity="0.73"/><circle cx="1295.95" cy="561.6" r="0.74" fill-opacity="0.87"/><circle cx="1298.4" cy="535.49" r="0.78" fill-opacity="0.87"/><circle cx="1318.23" cy="539.22" r="0.56" fill-opacity="0.59"/><circle cx="1311.08" cy="560.99" r="0.89" fill-opacity="0.84"/><circle cx="1312.09" cy="567.4" r="0.83" fill-opacity="0.43"/><circle cx="1318.29" cy="547.36" r="0.7" fill-opacity="0.62"/><circle cx="1314.5" cy="557.96" r="0.58" fill-opacity="0.59"/><circle cx="1298.93" cy="557.8" r="0.86" fill-opacity="0.36"/><circle cx="1295.82" cy="554.9" r="0.51" fill-opacity="0.53"/><circle cx="1297.03" cy="549.65" r="0.89" fill-opacity="0.88"/><circle cx="1307.97" cy="560.02" r="0.52" fill-opacity="0.78"/><circle cx="1303.87" cy="575" r="0.91" fill-opacity="0.49"/><circle cx="1316.2" cy="572.42" r="0.79" fill-opacity="0.74"/><circle cx="1324.59" cy="570.21" r="0.54" fill-opacity="0.87"/><circle cx="1297.08" cy="548.46" r="0.54" fill-opacity="0.82"/><circle cx="1316.98" cy="563.38" r="0.78" fill-opacity="0.86"/><circle cx="1304.67" cy="570.31" r="0.76" fill-opacity="0.48"/><circle cx="1308.95" cy="560.93" r="0.66" fill-opacity="0.52"/><circle cx="1306.35" cy="552.64" r="0.75" fill-opacity="0.45"/><circle cx="1300.32" cy="566.64" r="0.87" fill-opacity="0.65"/><circle cx="1307.83" cy="563.07" r="0.97" fill-opacity="0.41"/><circle cx="1314.61" cy="539.88" r="0.7" fill-opacity="0.63"/><circle cx="1300.61" cy="545.43" r="0.67" fill-opacity="0.81"/><circle cx="1302.92" cy="547.45" r="0.53" fill-opacity="0.42"/><circle cx="1320.37" cy="565.34" r="0.63" fill-opacity="0.44"/><circle cx="1322.93" cy="568.44" r="0.64" fill-opacity="0.48"/><circle cx="1299.12" cy="583.32" r="0.58" fill-opacity="0.6"/><circle cx="1306.56" cy="574.51" r="0.65" fill-opacity="0.55"/><circle cx="1320.88" cy="558.6" r="0.6" fill-opacity="0.63"/><circle cx="1318.09" cy="558.88" r="0.54" fill-opacity="0.57"/><circle cx="1318.39" cy="561.82" r="0.79" fill-opacity="0.64"/><circle cx="1306.02" cy="551.68" r="0.86" fill-opacity="0.83"/></g></svg>
<div class="abs" style="left:1358.5px;top:501.5px;width:94.5px;height:94.5px;background:#151518;border-radius:5.5px;"></div>
</div></div>
<div class="abs" style="left:552px;top:190px;width:894px;height:0.7px;background:#141416;"></div>


<div class="abs" style="left:552px;top:590px;width:100.5px;height:55px;background:linear-gradient(90deg,#333338 70%,#383941);"></div>
<svg style="left:589.7px;top:596px;" width="24" height="16" viewBox="589.7 596 24 16"><polyline points="593.6,607.5 601.7,600.9 609.8,607.5" fill="none" stroke="#fff" stroke-width="2.4" stroke-linecap="round" stroke-linejoin="miter"/></svg>
<div class="t" style="left:581.7px;top:624.18px;width:40px;text-align:center;font-size:14.2px;color:#ececf1;">1</div>
<div class="abs" style="left:652.5px;top:590px;width:100.5px;height:55px;background:linear-gradient(90deg,#252833,#2a2e3c);"></div>
<div class="abs" style="left:652.5px;top:590px;width:1px;height:55px;background:#343744;"></div>
<svg style="left:690.2px;top:596px;" width="24" height="16" viewBox="690.2 596 24 16"><polyline points="694.1,607.5 702.2,600.9 710.3,607.5" fill="none" stroke="#fff" stroke-width="2.4" stroke-linecap="round" stroke-linejoin="miter"/></svg>
<div class="t" style="left:682.2px;top:624.18px;width:40px;text-align:center;font-size:14.2px;color:#ececf1;">2</div>
<div class="abs" style="left:753px;top:590px;width:100.5px;height:55px;background:linear-gradient(90deg,#252833,#2a2e3c);"></div>
<div class="abs" style="left:753px;top:590px;width:1px;height:55px;background:#343744;"></div>
<svg style="left:790.7px;top:596px;" width="24" height="16" viewBox="790.7 596 24 16"><polyline points="794.6,607.5 802.7,600.9 810.8,607.5" fill="none" stroke="#fff" stroke-width="2.4" stroke-linecap="round" stroke-linejoin="miter"/></svg>
<div class="t" style="left:782.7px;top:624.18px;width:40px;text-align:center;font-size:14.2px;color:#ececf1;">3</div>
<div class="abs" style="left:853.5px;top:590px;width:100.5px;height:55px;background:linear-gradient(90deg,#252833,#2a2e3c);"></div>
<div class="abs" style="left:853.5px;top:590px;width:1px;height:55px;background:#343744;"></div>
<svg style="left:891.2px;top:596px;" width="24" height="16" viewBox="891.2 596 24 16"><polyline points="895.1,607.5 903.2,600.9 911.3,607.5" fill="none" stroke="#fff" stroke-width="2.4" stroke-linecap="round" stroke-linejoin="miter"/></svg>
<div class="t" style="left:883.2px;top:624.18px;width:40px;text-align:center;font-size:14.2px;color:#ececf1;">4</div>
<div class="abs" style="left:954px;top:590px;width:100.5px;height:55px;background:linear-gradient(90deg,#252833,#2a2e3c);"></div>
<div class="abs" style="left:954px;top:590px;width:1px;height:55px;background:#343744;"></div>
<svg style="left:991.7px;top:596px;" width="24" height="16" viewBox="991.7 596 24 16"><polyline points="995.6,607.5 1003.7,600.9 1011.8,607.5" fill="none" stroke="#fff" stroke-width="2.4" stroke-linecap="round" stroke-linejoin="miter"/></svg>
<div class="t" style="left:983.7px;top:624.18px;width:40px;text-align:center;font-size:14.2px;color:#ececf1;">5</div>
<div class="abs" style="left:1054.5px;top:590px;width:100.5px;height:55px;background:linear-gradient(90deg,#252833,#2a2e3c);"></div>
<div class="abs" style="left:1054.5px;top:590px;width:1px;height:55px;background:#343744;"></div>
<svg style="left:1092.2px;top:596px;" width="24" height="16" viewBox="1092.2 596 24 16"><polyline points="1096.1,607.5 1104.2,600.9 1112.3,607.5" fill="none" stroke="#fff" stroke-width="2.4" stroke-linecap="round" stroke-linejoin="miter"/></svg>
<div class="t" style="left:1084.2px;top:624.18px;width:40px;text-align:center;font-size:14.2px;color:#ececf1;">6</div>
<div class="abs" style="left:1155px;top:590px;width:100.5px;height:55px;background:linear-gradient(90deg,#252833,#2a2e3c);"></div>
<div class="abs" style="left:1155px;top:590px;width:1px;height:55px;background:#343744;"></div>
<svg style="left:1192.7px;top:596px;" width="24" height="16" viewBox="1192.7 596 24 16"><polyline points="1196.6,607.5 1204.7,600.9 1212.8,607.5" fill="none" stroke="#fff" stroke-width="2.4" stroke-linecap="round" stroke-linejoin="miter"/></svg>
<div class="t" style="left:1184.7px;top:624.18px;width:40px;text-align:center;font-size:14.2px;color:#ececf1;">7</div>
<div class="abs" style="left:1255.5px;top:590px;width:100.5px;height:55px;background:linear-gradient(90deg,#252833,#2a2e3c);"></div>
<div class="abs" style="left:1255.5px;top:590px;width:1px;height:55px;background:#343744;"></div>
<svg style="left:1293.2px;top:596px;" width="24" height="16" viewBox="1293.2 596 24 16"><polyline points="1297.1,607.5 1305.2,600.9 1313.3,607.5" fill="none" stroke="#fff" stroke-width="2.4" stroke-linecap="round" stroke-linejoin="miter"/></svg>
<div class="t" style="left:1285.2px;top:624.18px;width:40px;text-align:center;font-size:14.2px;color:#ececf1;">8</div>
<div class="abs" style="left:1356px;top:590px;width:90px;height:55px;background:linear-gradient(90deg,#252833,#2a2e3c);"></div>
<div class="abs" style="left:1356px;top:590px;width:1px;height:55px;background:#343744;"></div>
<svg style="left:1393.7px;top:596px;" width="24" height="16" viewBox="1393.7 596 24 16"><polyline points="1397.6,607.5 1405.7,600.9 1413.8,607.5" fill="none" stroke="#fff" stroke-width="2.4" stroke-linecap="round" stroke-linejoin="miter"/></svg>
<div class="t" style="left:1385.7px;top:624.18px;width:40px;text-align:center;font-size:14.2px;color:#ececf1;">9</div>


<div class="abs" style="left:0px;top:645px;width:1500px;height:5px;background:#000;"></div>
<div class="abs" style="left:0px;top:650px;width:1500px;height:63px;background:#1b1b1e;"></div>
<div class="abs" style="left:0px;top:650px;width:1500px;height:1px;background:#27272b;"></div>
<div class="abs" style="left:0px;top:713px;width:1500px;height:212px;background:#0d0d0f;"></div>
<div class="abs" style="left:0px;top:925px;width:1500px;height:5px;background:#000;"></div>
<div class="t" style="left:25px;top:665.13px;font-size:12.6px;color:#8e8e93;">トラック</div>
<div class="t" style="left:25px;top:683.99px;font-size:16.9px;color:#fff;">Synth Percussion</div>
<div class="abs" style="left:654px;top:661px;width:195px;height:41px;background:#242428;border-radius:9px;"></div>
<div class="abs" style="left:655.5px;top:662.5px;width:66.2px;height:38px;background:#3f3f45;border-radius:7.5px;"></div>
<div class="t" style="left:648.3px;top:676.73px;width:80px;text-align:center;font-size:12.6px;color:#f2f2f7;">トラック</div>
<div class="t" style="left:715.8px;top:675.35px;width:80px;text-align:center;font-size:14px;color:#f2f2f7;">Sends</div>
<div class="abs" style="left:787.2px;top:669px;width:1px;height:25px;background:#3c3c41;"></div>
<div class="t" style="left:788px;top:676.53px;width:60px;text-align:center;font-size:12.6px;color:#f2f2f7;">出力</div>
<div class="abs" style="left:1222px;top:661.5px;width:55px;height:40px;background:#252529;border-radius:8px;"></div>
<svg style="left:1236px;top:668px;" width="28" height="28" viewBox="1236 668 28 28"><path d="M1241.2,690.2 L1245.2,688.26 L1256.31,677.14 L1254.26,675.09 L1243.14,686.2 Z" fill="#fff" stroke="#fff" stroke-width="0.5" stroke-linejoin="round"/><path d="M1257.02,676.43 L1258.72,674.73 Q1258.82,672.58 1256.67,672.68 L1254.97,674.38 Z" fill="#fff" stroke="#fff" stroke-width="0.5" stroke-linejoin="round"/></svg>
<div class="t" style="left:1299.8px;top:664.85px;font-size:12.7px;color:#8e8e93;">オートメーション</div>
<div class="t" style="left:1299.6px;top:684.06px;font-size:16px;color:#32c85a;">Read</div>
<svg style="left:1340px;top:684px;" width="16" height="18" viewBox="1340 684 16 18"><g fill="none" stroke="#6e6e73" stroke-width="1.5" stroke-linecap="round" stroke-linejoin="round"><polyline points="1344,689.6 1348,686 1352,689.6"/><polyline points="1344,693.6 1348,697.2 1352,693.6"/></g></svg>
<svg style="left:1446px;top:676px;" width="28" height="10" viewBox="1446 676 28 10"><circle cx="1451.8" cy="681.4" r="2.1" fill="#fff"/><circle cx="1460.2" cy="681.4" r="2.1" fill="#fff"/><circle cx="1468.6" cy="681.4" r="2.1" fill="#fff"/></svg>
<svg style="left:76px;top:808px;" width="24" height="24" viewBox="76 808 24 24"><path d="M88,811.9 V829 M79.4,820.4 H96.6" stroke="#fff" stroke-width="2.5" stroke-linecap="round" fill="none"/></svg>
<div class="t" style="left:37.6px;top:845.69px;width:100px;text-align:center;font-size:13.6px;color:#b4b4b9;letter-spacing:0.1px;">MIDI FX</div>
<div class="abs" style="left:171px;top:758px;width:2px;height:124px;background:#333337;border-radius:1px;"></div>
<div class="abs" style="left:773px;top:758px;width:2px;height:124px;background:#333337;border-radius:1px;"></div>
<div class="abs" style="left:183.4px;top:729px;width:579.2px;height:182px;background:#0e1114;border-radius:10px;border:2px solid #cfcfcf;"></div>
<div class="abs" style="left:183.4px;top:729px;width:579.2px;height:58.8px;background:#c7c7c7;border-radius:10px 10px 0 0;"></div>
<svg style="left:197.2px;top:742.6px;" width="28" height="28" viewBox="197.2 742.6 28 28"><circle cx="211.2" cy="756.6" r="12.4" fill="#26c8f0"/><g fill="none" stroke="#101214" stroke-width="2.1" stroke-linecap="round"><path d="M214.17,752.45 A5.6,5.6 0 1 1 208.23,752.45"/><path d="M211.2,750 v6.4"/></g></svg>
<div class="t" style="left:239.2px;top:747.82px;font-size:19px;color:#1a1a1c;letter-spacing:0.45px;-webkit-text-stroke:0.6px #1a1a1c;">Alchemy</div>
<div class="abs" style="left:186.5px;top:790.7px;width:142.7px;height:57.3px;background:#171c21;"></div>
<div class="t" style="left:187.85px;top:812.26px;width:140px;text-align:center;font-size:14.4px;color:#565c63;letter-spacing:0.15px;">Vocals 1</div>
<div class="abs" style="left:330.8px;top:790.7px;width:141.7px;height:57.3px;background:#171c21;"></div>
<div class="t" style="left:331.65px;top:812.26px;width:140px;text-align:center;font-size:14.4px;color:#565c63;letter-spacing:0.15px;">Vocals 2</div>
<div class="abs" style="left:474px;top:790.7px;width:142.4px;height:57.3px;background:#10262d;"></div>
<div class="abs" style="left:600.5px;top:790.7px;width:15.9px;height:57.3px;background:#0a3b47;"></div>
<div class="t" style="left:475.2px;top:812.26px;width:140px;text-align:center;font-size:14.4px;color:#3d8895;letter-spacing:0.15px;">Metal Pipe</div>
<div class="abs" style="left:618px;top:790.7px;width:141.2px;height:57.3px;background:#055a6b;"></div>
<div class="t" style="left:618.6px;top:812.26px;width:140px;text-align:center;font-size:14.4px;color:#1cc2e0;letter-spacing:0.15px;-webkit-text-stroke:0.4px #1cc2e0;">Garbled</div>
<div class="abs" style="left:186.5px;top:849.6px;width:142.7px;height:58.8px;background:#171c21;border-radius:0 0 0 7px;"></div>
<div class="t" style="left:187.85px;top:871.91px;width:140px;text-align:center;font-size:14.4px;color:#565c63;letter-spacing:0.15px;">Flying</div>
<div class="abs" style="left:330.8px;top:849.6px;width:141.7px;height:58.8px;background:#171c21;"></div>
<div class="t" style="left:331.65px;top:871.91px;width:140px;text-align:center;font-size:14.4px;color:#565c63;letter-spacing:0.15px;">Thin</div>
<div class="abs" style="left:474px;top:849.6px;width:142.4px;height:58.8px;background:#171c21;"></div>
<div class="t" style="left:475.2px;top:871.91px;width:140px;text-align:center;font-size:14.4px;color:#565c63;letter-spacing:0.15px;">Warm</div>
<div class="abs" style="left:618px;top:849.6px;width:141.2px;height:58.8px;background:#171c21;border-radius:0 0 7px 0;"></div>
<div class="t" style="left:618.6px;top:871.91px;width:140px;text-align:center;font-size:14.4px;color:#565c63;letter-spacing:0.15px;">Pitch Warble</div>
<svg style="left:596px;top:788px;" width="150" height="64" viewBox="596 788 150 64"><g fill="none" stroke="#22b9d8" stroke-width="1.6" stroke-linecap="round"><path d="M616.6,791.5 H604.6 a4,4 0 0 0 -4,4 V808"/><path d="M726.2,791.5 H738.2 a4,4 0 0 1 4,4 V808"/><path d="M616.6,847.9 H604.6 a4,4 0 0 1 -4,-4 V831.4"/><path d="M726.2,847.9 H738.2 a4,4 0 0 0 4,-4 V831.4"/></g></svg>
<div class="abs" style="left:780px;top:720px;width:719px;height:200px;overflow:hidden;"><div class="abs" style="left:-780px;top:-720px;width:1600px;height:1000px;">
<div class="abs" style="left:785.6px;top:729px;width:223.4px;height:182px;background:#152433;border-radius:9.5px;"></div>
<svg style="left:798.8px;top:742.8px;" width="28" height="28" viewBox="798.8 742.8 28 28"><circle cx="812.8" cy="756.8" r="12.4" fill="#26c8f0"/><g fill="none" stroke="#101820" stroke-width="2.1" stroke-linecap="round"><path d="M815.77,752.65 A5.6,5.6 0 1 1 809.83,752.65"/><path d="M812.8,750.2 v6.4"/></g></svg>
<div class="t" style="left:841.2px;top:747.82px;font-size:19px;color:#ececf0;letter-spacing:0.5px;-webkit-text-stroke:0.5px #ececf0;">Stereo Spread</div>
<div class="t" style="left:791.2px;top:804.93px;width:120px;text-align:center;font-size:14.5px;color:#a3abb5;letter-spacing:0.2px;">Lower Int</div>
<svg style="left:817.2px;top:823.4px;" width="68" height="70" viewBox="817.2 823.4 68 70"><defs><linearGradient id="kg1" x1="0" y1="0" x2="0" y2="1"><stop offset="0" stop-color="#4e5561"/><stop offset="1" stop-color="#333944"/></linearGradient><radialGradient id="kg1s" cx="0.5" cy="0.5" r="0.5"><stop offset="0.7" stop-color="#0a121b" stop-opacity="0.6"/><stop offset="1" stop-color="#0a121b" stop-opacity="0"/></radialGradient></defs><circle cx="851.2" cy="860.4" r="29" fill="url(#kg1s)"/><path d="M836.55,879.12 A26.2,26.2 0 1 1 865.85,879.12" fill="none" stroke="#1c2936" stroke-width="5" stroke-linecap="round"/><circle cx="851.2" cy="857.4" r="23.8" fill="#0f1924"/><circle cx="851.2" cy="857.4" r="20" fill="url(#kg1)"/><path d="M852.12,831.02 A26.4,26.4 0 0 1 865.58,879.54" fill="none" stroke="#2dcdf9" stroke-width="3.6" stroke-linecap="round"/><path d="M857.08,866.46 L861.66,873.5" stroke="#56d6fa" stroke-width="1.8" stroke-linecap="round"/></svg>
<div class="t" style="left:882.9px;top:804.93px;width:120px;text-align:center;font-size:14.5px;color:#a3abb5;letter-spacing:0.2px;">Upper Int</div>
<svg style="left:908.9px;top:823.4px;" width="68" height="70" viewBox="908.9 823.4 68 70"><defs><linearGradient id="kg2" x1="0" y1="0" x2="0" y2="1"><stop offset="0" stop-color="#4e5561"/><stop offset="1" stop-color="#333944"/></linearGradient><radialGradient id="kg2s" cx="0.5" cy="0.5" r="0.5"><stop offset="0.7" stop-color="#0a121b" stop-opacity="0.6"/><stop offset="1" stop-color="#0a121b" stop-opacity="0"/></radialGradient></defs><circle cx="942.9" cy="860.4" r="29" fill="url(#kg2s)"/><path d="M928.25,879.12 A26.2,26.2 0 1 1 957.55,879.12" fill="none" stroke="#1c2936" stroke-width="5" stroke-linecap="round"/><circle cx="942.9" cy="857.4" r="23.8" fill="#0f1924"/><circle cx="942.9" cy="857.4" r="20" fill="url(#kg2)"/><path d="M943.82,831.02 A26.4,26.4 0 0 1 957.28,879.54" fill="none" stroke="#2dcdf9" stroke-width="3.6" stroke-linecap="round"/><path d="M948.78,866.46 L953.36,873.5" stroke="#56d6fa" stroke-width="1.8" stroke-linecap="round"/></svg>
<div class="abs" style="left:1019px;top:729px;width:223.4px;height:182px;background:#c6c6c6;border-radius:9.5px;"></div>
<svg style="left:1032.4px;top:742.8px;" width="28" height="28" viewBox="1032.4 742.8 28 28"><circle cx="1046.4" cy="756.8" r="12.4" fill="#f2552d"/><g fill="none" stroke="#2a0a04" stroke-width="2.1" stroke-linecap="round"><path d="M1049.37,752.65 A5.6,5.6 0 1 1 1043.43,752.65"/><path d="M1046.4,750.2 v6.4"/></g></svg>
<div class="t" style="left:1074.6px;top:747.82px;font-size:19px;color:#1c1c1e;letter-spacing:0.4px;-webkit-text-stroke:0.5px #1c1c1e;">Delay Designer</div>
<div class="t" style="left:1024.6px;top:804.93px;width:120px;text-align:center;font-size:14.5px;color:#1c1c1e;letter-spacing:0.2px;-webkit-text-stroke:0.25px #1c1c1e;">Dry</div>
<svg style="left:1050.6px;top:823.2px;" width="68" height="72" viewBox="1050.6 823.2 68 72"><defs><linearGradient id="kg3" x1="0" y1="0" x2="0" y2="1"><stop offset="0" stop-color="#ffffff"/><stop offset="1" stop-color="#dedede"/></linearGradient><radialGradient id="kg3s" cx="0.5" cy="0.5" r="0.5"><stop offset="0.6" stop-color="#000" stop-opacity="0.33"/><stop offset="1" stop-color="#000" stop-opacity="0"/></radialGradient></defs><circle cx="1084.6" cy="862.2" r="27" fill="url(#kg3s)"/><path d="M1107.87,868.8 A26,26 0 0 1 1099.14,878.75" fill="none" stroke="#8c8c8c" stroke-width="4.4" stroke-linecap="round"/><path d="M1070.06,878.75 A26,26 0 1 1 1107.87,868.8" fill="none" stroke="#f2582e" stroke-width="4.4" stroke-linecap="round"/><circle cx="1084.6" cy="857.2" r="22.4" fill="#a9a9a9"/><circle cx="1084.6" cy="857.2" r="20.4" fill="url(#kg3)"/><path d="M1093.73,861.75 L1102.5,866.12" stroke="#f2582e" stroke-width="1.5" stroke-linecap="round"/></svg>
<div class="t" style="left:1116.3px;top:804.93px;width:120px;text-align:center;font-size:14.5px;color:#1c1c1e;letter-spacing:0.2px;-webkit-text-stroke:0.25px #1c1c1e;">Wet</div>
<svg style="left:1142.3px;top:823.2px;" width="68" height="72" viewBox="1142.3 823.2 68 72"><defs><linearGradient id="kg4" x1="0" y1="0" x2="0" y2="1"><stop offset="0" stop-color="#ffffff"/><stop offset="1" stop-color="#dedede"/></linearGradient><radialGradient id="kg4s" cx="0.5" cy="0.5" r="0.5"><stop offset="0.6" stop-color="#000" stop-opacity="0.33"/><stop offset="1" stop-color="#000" stop-opacity="0"/></radialGradient></defs><circle cx="1176.3" cy="862.2" r="27" fill="url(#kg4s)"/><path d="M1151.57,849.17 A26,26 0 1 1 1190.84,878.75" fill="none" stroke="#8c8c8c" stroke-width="4.4" stroke-linecap="round"/><path d="M1161.76,878.75 A26,26 0 0 1 1151.57,849.17" fill="none" stroke="#f2582e" stroke-width="4.4" stroke-linecap="round"/><circle cx="1176.3" cy="857.2" r="22.4" fill="#a9a9a9"/><circle cx="1176.3" cy="857.2" r="20.4" fill="url(#kg4)"/><path d="M1166.6,854.05 L1157.28,851.02" stroke="#f2582e" stroke-width="1.5" stroke-linecap="round"/></svg>
<div class="abs" style="left:1252.3px;top:729px;width:300px;height:182px;background:#152433;border-radius:9.5px;"></div>
<svg style="left:1265.5px;top:742.8px;" width="28" height="28" viewBox="1265.5 742.8 28 28"><circle cx="1279.5" cy="756.8" r="12.4" fill="#26c8f0"/><g fill="none" stroke="#101820" stroke-width="2.1" stroke-linecap="round"><path d="M1282.47,752.65 A5.6,5.6 0 1 1 1276.53,752.65"/><path d="M1279.5,750.2 v6.4"/></g></svg>
<div class="t" style="left:1307.9px;top:747.82px;font-size:19px;color:#ececf0;letter-spacing:0.82px;-webkit-text-stroke:0.5px #ececf0;">Bitcrusher</div>
<div class="t" style="left:1257.9px;top:804.93px;width:120px;text-align:center;font-size:14.5px;color:#a3abb5;letter-spacing:0.2px;">Resolution</div>
<svg style="left:1283.9px;top:823.4px;" width="68" height="70" viewBox="1283.9 823.4 68 70"><defs><linearGradient id="kg5" x1="0" y1="0" x2="0" y2="1"><stop offset="0" stop-color="#4e5561"/><stop offset="1" stop-color="#333944"/></linearGradient><radialGradient id="kg5s" cx="0.5" cy="0.5" r="0.5"><stop offset="0.7" stop-color="#0a121b" stop-opacity="0.6"/><stop offset="1" stop-color="#0a121b" stop-opacity="0"/></radialGradient></defs><circle cx="1317.9" cy="860.4" r="29" fill="url(#kg5s)"/><path d="M1303.25,879.12 A26.2,26.2 0 1 1 1332.55,879.12" fill="none" stroke="#1c2936" stroke-width="5" stroke-linecap="round"/><circle cx="1317.9" cy="857.4" r="23.8" fill="#0f1924"/><circle cx="1317.9" cy="857.4" r="20" fill="url(#kg5)"/><path d="M1303.14,879.29 A26.4,26.4 0 1 1 1340.76,870.6" fill="none" stroke="#2dcdf9" stroke-width="3.6" stroke-linecap="round"/><path d="M1327.25,862.8 L1334.53,867" stroke="#56d6fa" stroke-width="1.8" stroke-linecap="round"/></svg>
<div class="t" style="left:1349.6px;top:804.93px;width:120px;text-align:center;font-size:14.5px;color:#a3abb5;letter-spacing:0.2px;">Drive</div>
<svg style="left:1375.6px;top:823.4px;" width="68" height="70" viewBox="1375.6 823.4 68 70"><defs><linearGradient id="kg6" x1="0" y1="0" x2="0" y2="1"><stop offset="0" stop-color="#4e5561"/><stop offset="1" stop-color="#333944"/></linearGradient><radialGradient id="kg6s" cx="0.5" cy="0.5" r="0.5"><stop offset="0.7" stop-color="#0a121b" stop-opacity="0.6"/><stop offset="1" stop-color="#0a121b" stop-opacity="0"/></radialGradient></defs><circle cx="1409.6" cy="860.4" r="29" fill="url(#kg6s)"/><path d="M1394.95,879.12 A26.2,26.2 0 1 1 1424.25,879.12" fill="none" stroke="#1c2936" stroke-width="5" stroke-linecap="round"/><circle cx="1409.6" cy="857.4" r="23.8" fill="#0f1924"/><circle cx="1409.6" cy="857.4" r="20" fill="url(#kg6)"/><path d="M1394.84,879.29 A26.4,26.4 0 0 1 1383.3,859.7" fill="none" stroke="#2dcdf9" stroke-width="3.6" stroke-linecap="round"/><path d="M1398.84,858.34 L1390.47,859.07" stroke="#56d6fa" stroke-width="1.8" stroke-linecap="round"/></svg>
<div class="t" style="left:1483.6px;top:804.93px;font-size:14.5px;color:#a3abb5;letter-spacing:0.2px;">Downsampling</div>
<svg style="left:1467.3px;top:823.4px;" width="68" height="70" viewBox="1467.3 823.4 68 70"><defs><linearGradient id="kg7" x1="0" y1="0" x2="0" y2="1"><stop offset="0" stop-color="#4e5561"/><stop offset="1" stop-color="#333944"/></linearGradient><radialGradient id="kg7s" cx="0.5" cy="0.5" r="0.5"><stop offset="0.7" stop-color="#0a121b" stop-opacity="0.6"/><stop offset="1" stop-color="#0a121b" stop-opacity="0"/></radialGradient></defs><circle cx="1501.3" cy="860.4" r="29" fill="url(#kg7s)"/><path d="M1486.65,879.12 A26.2,26.2 0 1 1 1515.95,879.12" fill="none" stroke="#1c2936" stroke-width="5" stroke-linecap="round"/><circle cx="1501.3" cy="857.4" r="23.8" fill="#0f1924"/><circle cx="1501.3" cy="857.4" r="20" fill="url(#kg7)"/><path d="M1486.54,879.29 A26.4,26.4 0 0 1 1475,859.7" fill="none" stroke="#2dcdf9" stroke-width="3.6" stroke-linecap="round"/><path d="M1490.54,858.34 L1482.17,859.07" stroke="#56d6fa" stroke-width="1.8" stroke-linecap="round"/></svg>
</div></div>


<div class="abs" style="left:0px;top:930px;width:1500px;height:88px;background:#212026;"></div>
<svg style="left:24px;top:950px;" width="32" height="26" viewBox="24 950 32 26"><g fill="none" stroke="#fff" stroke-width="2" stroke-linejoin="round" stroke-linecap="round"><path d="M28.6,962.6 l3.6,-7 q0.6,-1.2 2,-1.2 h12.2 q1.4,0 2,1.2 l3.6,7 v5.4 q0,2.6 -2.6,2.6 h-18.2 q-2.6,0 -2.6,-2.6 Z"/><path d="M28.8,962.8 h7.4 q0.4,2.6 4.1,2.6 q3.7,0 4.1,-2.6 h7.4"/></g><path d="M34.6,957.2 h11.4 M33.6,959.8 h13.4" stroke="#fff" stroke-opacity="0.75" stroke-width="1.3" fill="none"/></svg>
<svg style="left:86px;top:949px;" width="24" height="24" viewBox="86 949 24 24"><circle cx="98" cy="961.6" r="9.6" fill="none" stroke="#fff" stroke-width="2"/><circle cx="97.9" cy="956.9" r="1.5" fill="#fff"/><path d="M96.2,960.2 h2.2 v5.8 M95.4,966.2 h5.4" fill="none" stroke="#fff" stroke-width="1.9" stroke-linecap="round" stroke-linejoin="round"/></svg>
<svg style="left:141px;top:950px;" width="30" height="24" viewBox="141 950 30 24"><g fill="none" stroke="#fff" stroke-width="2" stroke-linejoin="round" stroke-linecap="round"><rect x="144.4" y="953.4" width="22.4" height="17.4" rx="3"/><path d="M152.2,953.6 V970.6"/></g><path d="M148.2,956.6 V967.6" stroke="#fff" stroke-width="1.4" stroke-linecap="round"/><circle cx="148.2" cy="960.2" r="1.9" fill="#fff"/></svg>
<svg style="left:680px;top:948px;" width="26" height="26" viewBox="680 948 26 26"><path d="M684,970.4 L688.01,968.48 L699.29,957.32 L697.25,955.26 L685.97,966.42 Z" fill="#fff" stroke="#fff" stroke-width="0.5" stroke-linejoin="round"/><path d="M700,956.62 L701.71,954.93 Q701.83,952.78 699.67,952.87 L697.96,954.56 Z" fill="#fff" stroke="#fff" stroke-width="0.5" stroke-linejoin="round"/></svg>
<div class="abs" style="left:722px;top:941.2px;width:56px;height:40.6px;background:#a9a9ae;border-radius:7.5px;"></div>
<svg style="left:736px;top:948px;" width="28" height="28" viewBox="736 948 28 28"><circle cx="749.6" cy="963.4" r="6.6" fill="none" stroke="#1c1c1e" stroke-width="2.1"/><path d="M749.6,957.6 V963.6" stroke="#1c1c1e" stroke-width="1.9" stroke-linecap="round"/><circle cx="738.4" cy="963.4" r="1.3" fill="#1c1c1e"/><circle cx="740.77" cy="956.5" r="1.3" fill="#1c1c1e"/><circle cx="749.6" cy="952.2" r="1.3" fill="#1c1c1e"/><circle cx="758.43" cy="956.5" r="1.3" fill="#1c1c1e"/><circle cx="760.8" cy="963.4" r="1.3" fill="#1c1c1e"/><circle cx="758.43" cy="970.3" r="1.3" fill="#1c1c1e"/><circle cx="740.77" cy="970.3" r="1.3" fill="#1c1c1e"/></svg>
<svg style="left:796px;top:950px;" width="24" height="24" viewBox="796 950 24 24"><g stroke="#fff" stroke-width="1.8" stroke-linecap="round" fill="none"><path d="M801.2,953.2 V971 M808.2,953.2 V971 M815.2,953.2 V971"/></g><circle cx="801.2" cy="964.6" r="2.1" fill="#212026" stroke="#fff" stroke-width="1.6"/><circle cx="808.2" cy="958.6" r="2.1" fill="#212026" stroke="#fff" stroke-width="1.6"/><circle cx="815.2" cy="964.6" r="2.1" fill="#212026" stroke="#fff" stroke-width="1.6"/></svg>
<svg style="left:1445px;top:950px;" width="30" height="24" viewBox="1445 950 30 24"><rect x="1447.2" y="952.2" width="25" height="19.6" rx="2.6" fill="#fff"/><g fill="#212026"><rect x="1452.2" y="952.2" width="2.6" height="11.4" rx="0.6"/><rect x="1458.4" y="952.2" width="2.6" height="11.4" rx="0.6"/><rect x="1464.6" y="952.2" width="2.6" height="11.4" rx="0.6"/><rect x="1453.1" y="963" width="0.9" height="8.8"/><rect x="1459.3" y="963" width="0.9" height="8.8"/><rect x="1465.5" y="963" width="0.9" height="8.8"/></g></svg>
<div class="abs" style="left:551.8px;top:1001.6px;width:396.6px;height:7.4px;background:#55555b;border-radius:3.7px;"></div>


</div>
<!-- white frame -->
<div class="frame" style="left:0;top:0;width:1500px;height:1px;"></div>
<div class="frame" style="left:0;top:0;width:1px;height:1018px;"></div>
<div class="frame" style="left:1499px;top:0;width:1px;height:1018px;"></div>
<div class="frame" style="left:0;top:1016px;width:1500px;height:2px;"></div>
</div>
</body>
</html>
